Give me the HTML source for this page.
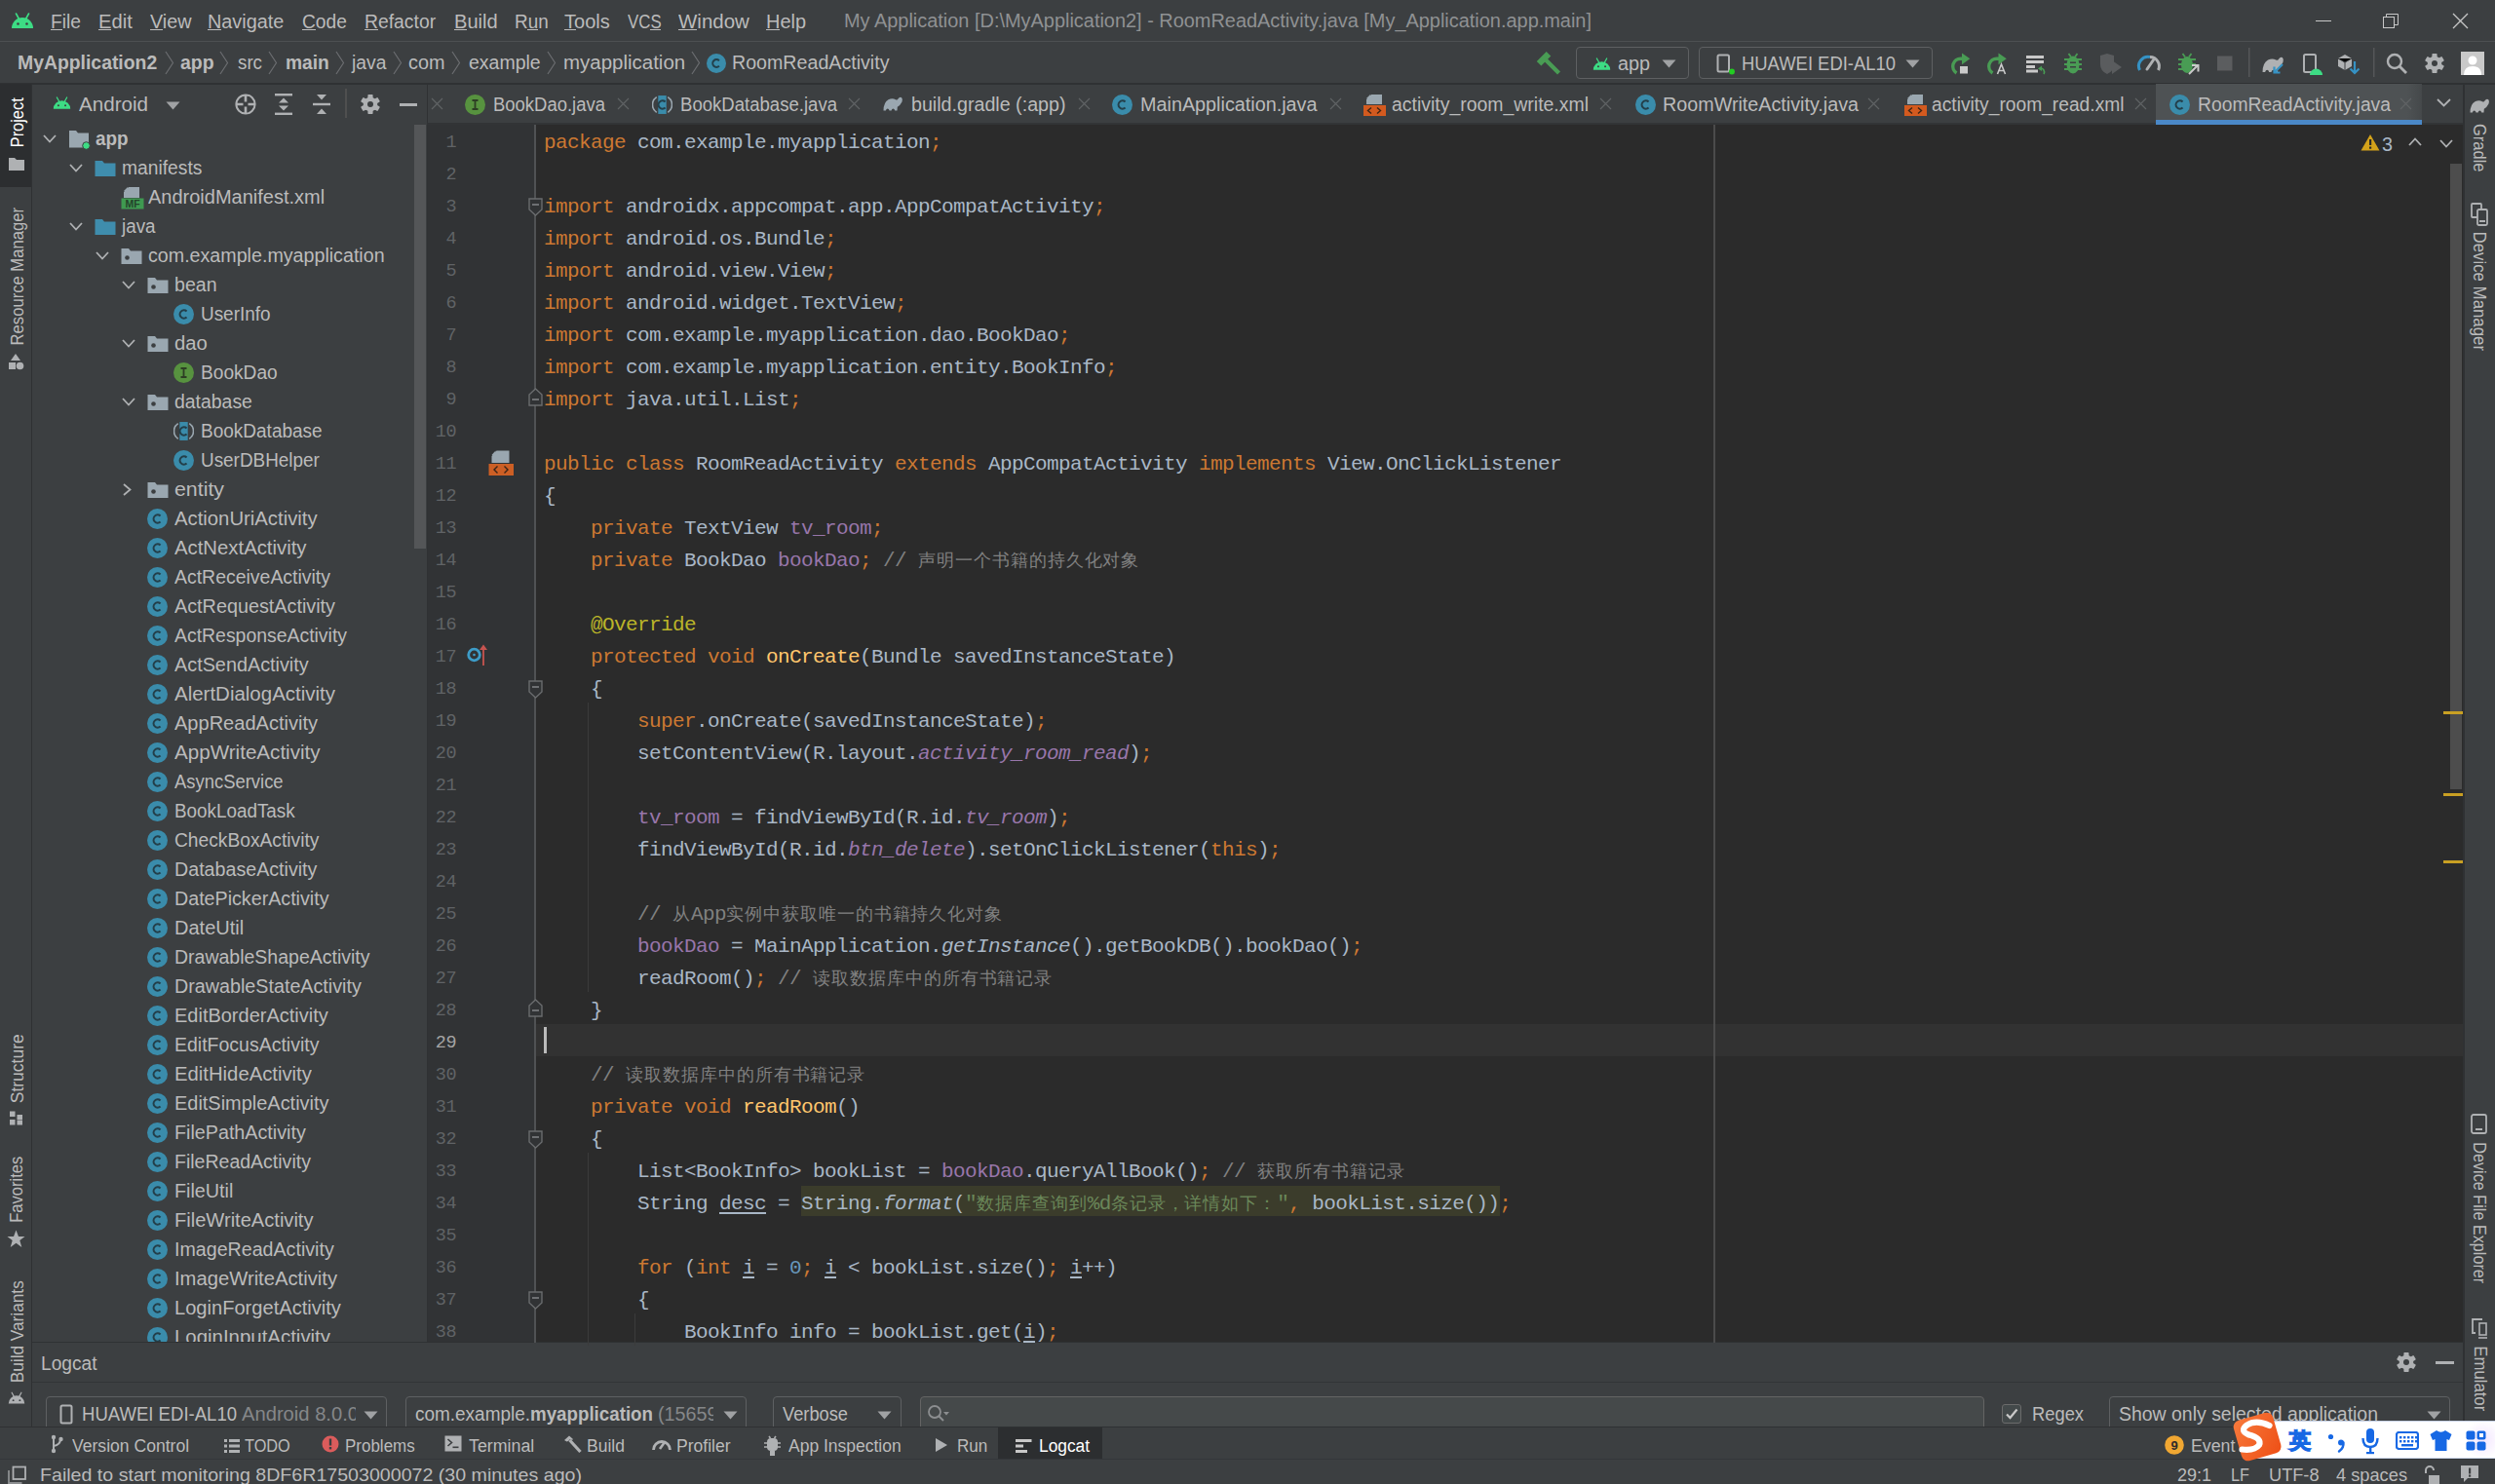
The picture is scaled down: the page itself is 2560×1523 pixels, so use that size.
<!DOCTYPE html><html><head><meta charset="utf-8"><title>Android Studio</title><style>
*{margin:0;padding:0;box-sizing:border-box}
html,body{width:2560px;height:1523px;overflow:hidden;background:#3c3f41}
body{position:relative;font-family:"Liberation Sans",sans-serif}
body>div{position:absolute}
.t{position:absolute;white-space:pre}
.code{position:absolute;white-space:pre;font-family:"Liberation Mono",monospace;}
</style></head><body>
<div style="position:absolute;left:0px;top:0px;width:2560px;height:1523px;background:#3c3f41;"></div>
<div style="position:absolute;left:0px;top:42px;width:2560px;height:1px;background:#4d5052;"></div>
<div style="position:absolute;left:0px;top:85px;width:2560px;height:2px;background:#2f3133;"></div>
<div style="position:absolute;left:32px;top:86px;width:1px;height:1378px;background:#2f3133;"></div>
<div style="position:absolute;left:2527px;top:86px;width:2px;height:1378px;background:#2f3133;"></div>
<div style="position:absolute;left:439px;top:128px;width:2088px;height:1250px;background:#2b2b2b;"></div>
<div style="position:absolute;left:439px;top:128px;width:110px;height:1250px;background:#313335;"></div>
<div style="position:absolute;left:438px;top:86px;width:1px;height:1292px;background:#2f3133;"></div>
<div style="position:absolute;left:33px;top:1377px;width:2494px;height:1px;background:#2f3133;"></div>
<div style="position:absolute;left:33px;top:1418px;width:2494px;height:1px;background:#323436;"></div>
<div style="position:absolute;left:0px;top:1464px;width:2560px;height:1px;background:#2f3133;"></div>
<div style="position:absolute;left:0px;top:1497px;width:2560px;height:1px;background:#323436;"></div>
<svg style="position:absolute;left:11px;top:13px" width="24" height="16" viewBox="0 0 24 16"><path d="M1 16 A11 11 0 0 1 23 16 Z" fill="#3ddc84"/><path d="M5.5 1 L8.5 6.5 M18.5 1 L15.5 6.5" stroke="#3ddc84" stroke-width="1.6" stroke-linecap="round"/><circle cx="7.5" cy="11.5" r="1.3" fill="#3c3f41"/><circle cx="16.5" cy="11.5" r="1.3" fill="#3c3f41"/></svg>
<div class="t" style="left:52.4px;top:12.07px;font-size:20px;line-height:20px;color:#bbbbbb;transform:scaleX(0.9650);transform-origin:0 0;">File</div>
<div style="position:absolute;left:52px;top:30px;width:12px;height:1px;background:#bbbbbb;"></div>
<div class="t" style="left:101.0px;top:12.07px;font-size:20px;line-height:20px;color:#bbbbbb;transform:scaleX(1.0097);transform-origin:0 0;">Edit</div>
<div style="position:absolute;left:101px;top:30px;width:13px;height:1px;background:#bbbbbb;"></div>
<div class="t" style="left:154.0px;top:12.07px;font-size:20px;line-height:20px;color:#bbbbbb;transform:scaleX(0.9886);transform-origin:0 0;">View</div>
<div style="position:absolute;left:154px;top:30px;width:13px;height:1px;background:#bbbbbb;"></div>
<div class="t" style="left:212.6px;top:12.07px;font-size:20px;line-height:20px;color:#bbbbbb;transform:scaleX(0.9919);transform-origin:0 0;">Navigate</div>
<div style="position:absolute;left:213px;top:30px;width:14px;height:1px;background:#bbbbbb;"></div>
<div class="t" style="left:310.0px;top:12.07px;font-size:20px;line-height:20px;color:#bbbbbb;transform:scaleX(0.9579);transform-origin:0 0;">Code</div>
<div style="position:absolute;left:310px;top:30px;width:14px;height:1px;background:#bbbbbb;"></div>
<div class="t" style="left:374.0px;top:12.07px;font-size:20px;line-height:20px;color:#bbbbbb;transform:scaleX(0.9671);transform-origin:0 0;">Refactor</div>
<div style="position:absolute;left:374px;top:30px;width:14px;height:1px;background:#bbbbbb;"></div>
<div class="t" style="left:465.5px;top:12.07px;font-size:20px;line-height:20px;color:#bbbbbb;transform:scaleX(1.0051);transform-origin:0 0;">Build</div>
<div style="position:absolute;left:466px;top:30px;width:13px;height:1px;background:#bbbbbb;"></div>
<div class="t" style="left:527.5px;top:12.07px;font-size:20px;line-height:20px;color:#bbbbbb;transform:scaleX(0.9457);transform-origin:0 0;">Run</div>
<div style="position:absolute;left:541px;top:30px;width:11px;height:1px;background:#bbbbbb;"></div>
<div class="t" style="left:579.0px;top:12.07px;font-size:20px;line-height:20px;color:#bbbbbb;transform:scaleX(1.0002);transform-origin:0 0;">Tools</div>
<div style="position:absolute;left:579px;top:30px;width:12px;height:1px;background:#bbbbbb;"></div>
<div class="t" style="left:644.0px;top:12.07px;font-size:20px;line-height:20px;color:#bbbbbb;transform:scaleX(0.8438);transform-origin:0 0;">VCS</div>
<div style="position:absolute;left:667px;top:30px;width:11px;height:1px;background:#bbbbbb;"></div>
<div class="t" style="left:696.0px;top:12.07px;font-size:20px;line-height:20px;color:#bbbbbb;transform:scaleX(1.0248);transform-origin:0 0;">Window</div>
<div style="position:absolute;left:696px;top:30px;width:19px;height:1px;background:#bbbbbb;"></div>
<div class="t" style="left:785.5px;top:12.07px;font-size:20px;line-height:20px;color:#bbbbbb;transform:scaleX(0.9967);transform-origin:0 0;">Help</div>
<div style="position:absolute;left:786px;top:30px;width:14px;height:1px;background:#bbbbbb;"></div>
<div class="t" style="left:866.0px;top:10.77px;font-size:20px;line-height:20px;color:#8f9193;transform:scaleX(0.9961);transform-origin:0 0;">My Application [D:\MyApplication2] - RoomReadActivity.java [My_Application.app.main]</div>
<div style="position:absolute;left:2376px;top:21px;width:16px;height:1px;background:#c8c8c8;"></div>
<svg style="position:absolute;left:2445px;top:13px;" width="18" height="16" viewBox="0 0 18 16"><rect x="0.5" y="4.5" width="11" height="11" fill="none" stroke="#c8c8c8" stroke-width="1"/><path d="M3.5 4.5 V1.5 H15.5 V12.5 H11.5" fill="none" stroke="#c8c8c8" stroke-width="1"/></svg>
<svg style="position:absolute;left:2516px;top:13px;" width="17" height="17" viewBox="0 0 17 17"><path d="M1 1 L16 16 M16 1 L1 16" stroke="#c8c8c8" stroke-width="1.3"/></svg>
<div class="t" style="left:17.8px;top:54.07px;font-size:20px;line-height:20px;color:#bbbbbb;font-weight:bold;transform:scaleX(0.9689);transform-origin:0 0;">MyApplication2</div>
<div class="t" style="left:184.8px;top:54.07px;font-size:20px;line-height:20px;color:#bbbbbb;font-weight:bold;transform:scaleX(0.9759);transform-origin:0 0;">app</div>
<div class="t" style="left:244.3px;top:54.07px;font-size:20px;line-height:20px;color:#bbbbbb;transform:scaleX(0.9377);transform-origin:0 0;">src</div>
<div class="t" style="left:293.0px;top:54.07px;font-size:20px;line-height:20px;color:#bbbbbb;font-weight:bold;transform:scaleX(0.9597);transform-origin:0 0;">main</div>
<div class="t" style="left:360.8px;top:54.07px;font-size:20px;line-height:20px;color:#bbbbbb;transform:scaleX(0.9648);transform-origin:0 0;">java</div>
<div class="t" style="left:419.0px;top:54.07px;font-size:20px;line-height:20px;color:#bbbbbb;transform:scaleX(0.9925);transform-origin:0 0;">com</div>
<div class="t" style="left:481.3px;top:54.07px;font-size:20px;line-height:20px;color:#bbbbbb;transform:scaleX(0.9749);transform-origin:0 0;">example</div>
<div class="t" style="left:578.0px;top:54.07px;font-size:20px;line-height:20px;color:#bbbbbb;transform:scaleX(1.0238);transform-origin:0 0;">myapplication</div>
<div class="t" style="left:751.0px;top:54.07px;font-size:20px;line-height:20px;color:#bbbbbb;transform:scaleX(0.9817);transform-origin:0 0;">RoomReadActivity</div>
<svg style="position:absolute;left:169px;top:52px;" width="10" height="25" viewBox="0 0 10 25"><path d="M1 1 L8.5 12.5 L1 24" fill="none" stroke="#6b6d70" stroke-width="1.2"/></svg>
<svg style="position:absolute;left:225px;top:52px;" width="10" height="25" viewBox="0 0 10 25"><path d="M1 1 L8.5 12.5 L1 24" fill="none" stroke="#6b6d70" stroke-width="1.2"/></svg>
<svg style="position:absolute;left:275px;top:52px;" width="10" height="25" viewBox="0 0 10 25"><path d="M1 1 L8.5 12.5 L1 24" fill="none" stroke="#6b6d70" stroke-width="1.2"/></svg>
<svg style="position:absolute;left:344px;top:52px;" width="10" height="25" viewBox="0 0 10 25"><path d="M1 1 L8.5 12.5 L1 24" fill="none" stroke="#6b6d70" stroke-width="1.2"/></svg>
<svg style="position:absolute;left:403px;top:52px;" width="10" height="25" viewBox="0 0 10 25"><path d="M1 1 L8.5 12.5 L1 24" fill="none" stroke="#6b6d70" stroke-width="1.2"/></svg>
<svg style="position:absolute;left:463px;top:52px;" width="10" height="25" viewBox="0 0 10 25"><path d="M1 1 L8.5 12.5 L1 24" fill="none" stroke="#6b6d70" stroke-width="1.2"/></svg>
<svg style="position:absolute;left:561px;top:52px;" width="10" height="25" viewBox="0 0 10 25"><path d="M1 1 L8.5 12.5 L1 24" fill="none" stroke="#6b6d70" stroke-width="1.2"/></svg>
<svg style="position:absolute;left:709px;top:52px;" width="10" height="25" viewBox="0 0 10 25"><path d="M1 1 L8.5 12.5 L1 24" fill="none" stroke="#6b6d70" stroke-width="1.2"/></svg>
<svg style="position:absolute;left:725px;top:55px" width="20" height="20" viewBox="0 0 20 20"><circle cx="10" cy="10" r="10" fill="#3a8cab"/><path d="M12.9 7.2 A3.9 3.9 0 1 0 12.9 12.8" stroke="#233f4a" stroke-width="2" fill="none"/></svg>
<svg style="position:absolute;left:1576px;top:53px;" width="26" height="24" viewBox="0 0 26 24"><rect x="1" y="4" width="14" height="6.5" fill="#499c54" transform="rotate(-45 8 7.25)"/><path d="M10 8.5 L23.5 22" stroke="#499c54" stroke-width="4.2" stroke-linecap="butt"/></svg>
<div style="position:absolute;left:1617px;top:48px;width:116px;height:33px;background:transparent;border:1.5px solid #5e6062;border-radius:4px;"></div>
<svg style="position:absolute;left:1634px;top:59px" width="19" height="13" viewBox="0 0 24 16"><path d="M1 16 A11 11 0 0 1 23 16 Z" fill="#3ddc84"/><path d="M5.5 1 L8.5 6.5 M18.5 1 L15.5 6.5" stroke="#3ddc84" stroke-width="1.6" stroke-linecap="round"/><circle cx="7.5" cy="11.5" r="1.3" fill="#3c3f41"/><circle cx="16.5" cy="11.5" r="1.3" fill="#3c3f41"/></svg>
<div class="t" style="left:1660.0px;top:55.07px;font-size:20px;line-height:20px;color:#bbbbbb;transform:scaleX(0.9889);transform-origin:0 0;">app</div>
<svg style="position:absolute;left:1705px;top:61px;" width="15" height="9" viewBox="0 0 15 9"><path d="M0.5 0.5 H14.5 L7.5 8.5 Z" fill="#a0a2a4"/></svg>
<div style="position:absolute;left:1743px;top:48px;width:240px;height:33px;background:transparent;border:1.5px solid #5e6062;border-radius:4px;"></div>
<svg style="position:absolute;left:1761px;top:55px;" width="20" height="22" viewBox="0 0 20 22"><rect x="1.5" y="1.5" width="11.5" height="17" rx="1.5" fill="none" stroke="#afb1b3" stroke-width="2"/><circle cx="16" cy="18.5" r="3" fill="#22cc22"/></svg>
<div class="t" style="left:1786.5px;top:55.07px;font-size:20px;line-height:20px;color:#bbbbbb;transform:scaleX(0.9211);transform-origin:0 0;">HUAWEI EDI-AL10</div>
<svg style="position:absolute;left:1955px;top:61px;" width="15" height="9" viewBox="0 0 15 9"><path d="M0.5 0.5 H14.5 L7.5 8.5 Z" fill="#a0a2a4"/></svg>
<svg style="position:absolute;left:1995px;top:50px;overflow:visible" width="70" height="30" viewBox="0 0 70 30"></svg>
<svg style="position:absolute;left:0;top:0" width="2560" height="90" viewBox="0 0 2560 90"><path d="M2007.5 75 A8 8 0 0 1 2012 60.2 L2014 60.2" fill="none" stroke="#499c54" stroke-width="3.4"/><path d="M2013 54.6 L2021.3 60.2 L2013 66.2 Z" fill="#499c54"/><rect x="2011" y="68" width="8" height="7.5" fill="#c9c9c9"/><path d="M2044.5 75 A8 8 0 0 1 2049 60.2 L2051 60.2" fill="none" stroke="#499c54" stroke-width="3.4"/><path d="M2050.5 54.6 L2058.8 60.2 L2050.5 66.2 Z" fill="#499c54"/><path d="M2049.5 76 L2053.5 66 L2057.5 76 M2051 72.5 H2056" fill="none" stroke="#c9c9c9" stroke-width="1.6"/><rect x="2079" y="57" width="18" height="3" fill="#c9c9c9"/><rect x="2079" y="62" width="18" height="3" fill="#c9c9c9"/><rect x="2079" y="67" width="9" height="3" fill="#c9c9c9"/><rect x="2079" y="71.5" width="12" height="3" fill="#c9c9c9"/><path d="M2093 70 A4 4 0 0 1 2097 76" fill="none" stroke="#499c54" stroke-width="1.6"/><path d="M2091 70.5 L2095 67.5 L2095 73 Z" fill="#499c54"/><ellipse cx="2127" cy="66.5" rx="6.5" ry="9" fill="#499c54"/><path d="M2118 61 H2136 M2118 66 H2136 M2118 71 H2136 M2122.5 55 L2125 58.5 M2131.5 55 L2129 58.5" stroke="#499c54" stroke-width="1.8"/><rect x="2124" y="63.5" width="6" height="1.5" fill="#3c3f41"/><rect x="2124" y="68" width="6" height="1.5" fill="#3c3f41"/><path d="M2155 57 L2162 55 L2169 57 V66 Q2169 73 2162 76 Q2155 73 2155 66 Z" fill="#5a5c5e"/><path d="M2167 62 L2177 69 L2167 76 Z" fill="#5a5c5e"/><path d="M2195.5 72 A9.5 9.5 0 0 1 2206 58.5" fill="none" stroke="#3592c4" stroke-width="3"/><path d="M2206 58.5 A9.5 9.5 0 0 1 2214.5 72" fill="none" stroke="#afb1b3" stroke-width="3"/><path d="M2203 71 L2209.5 61.5" stroke="#afb1b3" stroke-width="3" stroke-linecap="round"/><ellipse cx="2244" cy="66.5" rx="6" ry="8.5" fill="#499c54"/><path d="M2235 61 H2253 M2235 66 H2253 M2235 71 H2247 M2239.5 55 L2242 58.5 M2248.5 55 L2246 58.5" stroke="#499c54" stroke-width="1.8"/><path d="M2246 76 L2255 67 M2249 67 H2255.5 V73.5" fill="none" stroke="#c9c9c9" stroke-width="2"/><rect x="2275" y="57.5" width="15.5" height="15" fill="#5b5d5f"/><rect x="2307" y="49" width="1.5" height="30" fill="#555759"/><rect x="2435" y="49" width="1.5" height="30" fill="#555759"/><g transform="translate(2321 58) scale(1.1)"><path d="M0.5 14.5 Q0.5 6 5.5 3.2 Q9.5 1.5 13 3.2 Q14.8 4 15.6 2.2 Q17 0 19 1 Q20.5 2.5 19.5 5.5 Q17.8 9 14.8 10.8 L14.5 14.5 L12.3 14.5 Q11.6 12.4 10.4 12.4 Q9.2 12.4 8.6 14.5 L6.6 14.5 Q6 12.4 4.7 12.4 Q3.5 12.4 2.8 14.5 Z" fill="#afb1b3"/></g><path d="M2342 66 L2334 74 M2333.5 68.5 V74.5 H2339.5" fill="none" stroke="#3592c4" stroke-width="2.2"/><rect x="2364" y="56" width="12" height="18" rx="1.5" fill="none" stroke="#afb1b3" stroke-width="2"/><path d="M2370 77 A6.5 6.5 0 0 1 2383 77 Z" fill="#3ddc84"/><path d="M2399 60 L2406 56 L2413 60 L2413 68 L2406 72 L2399 68 Z" fill="#afb1b3"/><path d="M2399 60 L2406 64 L2413 60 M2406 64 V72" stroke="#3c3f41" stroke-width="1"/><path d="M2416 63 V75 M2411.5 70.5 L2416 75 L2420.5 70.5" fill="none" stroke="#3592c4" stroke-width="2.2"/><circle cx="2457" cy="63" r="7" fill="none" stroke="#afb1b3" stroke-width="2.4"/><path d="M2462 68 L2469 75" stroke="#afb1b3" stroke-width="2.8"/></svg>
<svg style="position:absolute;left:2488px;top:55px" width="20" height="20" viewBox="0 0 20 20"><circle cx="10" cy="10" r="7.3" fill="#afb1b3"/><rect x="7.4" y="0" width="5.2" height="20" rx="0.8" fill="#afb1b3" transform="rotate(0 10 10)"/><rect x="7.4" y="0" width="5.2" height="20" rx="0.8" fill="#afb1b3" transform="rotate(60 10 10)"/><rect x="7.4" y="0" width="5.2" height="20" rx="0.8" fill="#afb1b3" transform="rotate(120 10 10)"/><circle cx="10" cy="10" r="3" fill="#3c3f41"/></svg>
<svg style="position:absolute;left:2525px;top:53px;" width="24" height="24" viewBox="0 0 24 24"><rect width="24" height="24" fill="#c9c9c9"/><circle cx="12" cy="9" r="4.5" fill="#fff"/><path d="M3 24 Q3 15 12 15 Q21 15 21 24 Z" fill="#fff"/></svg>
<div style="position:absolute;left:438px;top:126px;width:2089px;height:2px;background:#323436;"></div>
<div style="position:absolute;left:2212px;top:86px;width:273px;height:37px;background:#4e5254;"></div>
<div style="position:absolute;left:2212px;top:123px;width:273px;height:5px;background:#4a88c7;"></div>
<div style="position:absolute;left:2470px;top:86px;width:15px;height:37px;background:linear-gradient(90deg,rgba(60,63,65,0),rgba(60,63,65,0.5));"></div>
<svg style="position:absolute;left:442px;top:100px;" width="13" height="13" viewBox="0 0 13 13"><path d="M1 1 L12 12 M12 1 L1 12" stroke="#5f6264" stroke-width="1.2"/></svg>
<svg style="position:absolute;left:477px;top:97px;" width="21" height="21" viewBox="0 0 21 21"><circle cx="10.5" cy="10.5" r="10.5" fill="#57923f"/><path d="M7.5 6 H13.5 M7.5 15 H13.5 M10.5 6 V15" stroke="#2d3d24" stroke-width="1.8"/></svg>
<div class="t" style="left:506.0px;top:97.07px;font-size:20px;line-height:20px;color:#bbbbbb;transform:scaleX(0.9235);transform-origin:0 0;">BookDao.java</div>
<svg style="position:absolute;left:633px;top:100px;" width="13" height="13" viewBox="0 0 13 13"><path d="M1 1 L12 12 M12 1 L1 12" stroke="#5f6264" stroke-width="1.2"/></svg>
<svg style="position:absolute;left:669px;top:97px" width="21" height="21" viewBox="0 0 20 20"><path d="M4.5 2.5 A9 9 0 0 0 4.5 17.5" stroke="#9aa7b0" stroke-width="1.6" fill="none"/><path d="M15.5 2.5 A9 9 0 0 1 15.5 17.5" stroke="#9aa7b0" stroke-width="1.6" fill="none"/><rect x="6" y="1" width="8" height="18" fill="#3a8cab"/><path d="M12.9 7.2 A3.9 3.9 0 1 0 12.9 12.8" stroke="#233f4a" stroke-width="2" fill="none"/></svg>
<div class="t" style="left:698.0px;top:97.07px;font-size:20px;line-height:20px;color:#bbbbbb;transform:scaleX(0.9282);transform-origin:0 0;">BookDatabase.java</div>
<svg style="position:absolute;left:870px;top:100px;" width="13" height="13" viewBox="0 0 13 13"><path d="M1 1 L12 12 M12 1 L1 12" stroke="#5f6264" stroke-width="1.2"/></svg>
<svg style="position:absolute;left:906px;top:99px;" width="22" height="16" viewBox="0 0 22 16"><path d="M0.5 14.5 Q0.5 6 5.5 3.2 Q9.5 1.5 13 3.2 Q14.8 4 15.6 2.2 Q17 0 19 1 Q20.5 2.5 19.5 5.5 Q17.8 9 14.8 10.8 L14.5 14.5 L12.3 14.5 Q11.6 12.4 10.4 12.4 Q9.2 12.4 8.6 14.5 L6.6 14.5 Q6 12.4 4.7 12.4 Q3.5 12.4 2.8 14.5 Z" fill="#9aa7b0"/></svg>
<div class="t" style="left:935.0px;top:97.07px;font-size:20px;line-height:20px;color:#bbbbbb;transform:scaleX(0.9831);transform-origin:0 0;">build.gradle (:app)</div>
<svg style="position:absolute;left:1106px;top:100px;" width="13" height="13" viewBox="0 0 13 13"><path d="M1 1 L12 12 M12 1 L1 12" stroke="#5f6264" stroke-width="1.2"/></svg>
<svg style="position:absolute;left:1141px;top:97px" width="21" height="21" viewBox="0 0 20 20"><circle cx="10" cy="10" r="10" fill="#3a8cab"/><path d="M12.9 7.2 A3.9 3.9 0 1 0 12.9 12.8" stroke="#233f4a" stroke-width="2" fill="none"/></svg>
<div class="t" style="left:1170.0px;top:97.07px;font-size:20px;line-height:20px;color:#bbbbbb;transform:scaleX(0.9894);transform-origin:0 0;">MainApplication.java</div>
<svg style="position:absolute;left:1364px;top:100px;" width="13" height="13" viewBox="0 0 13 13"><path d="M1 1 L12 12 M12 1 L1 12" stroke="#5f6264" stroke-width="1.2"/></svg>
<svg style="position:absolute;left:1398px;top:96px" width="24" height="24" viewBox="0 0 24 24"><path d="M9 1 H20 V11 H4 V6 Z" fill="#9aa7b0"/><path d="M4 5 L8 1 V5 Z" fill="#9aa7b0"/><rect x="1" y="12" width="23" height="11" fill="#d35a1f"/><path d="M9 14.5 L5.5 17.5 L9 20.5 M15 14.5 L18.5 17.5 L15 20.5" fill="none" stroke="#3c2416" stroke-width="1.4"/></svg>
<div class="t" style="left:1427.5px;top:97.07px;font-size:20px;line-height:20px;color:#bbbbbb;transform:scaleX(0.9720);transform-origin:0 0;">activity_room_write.xml</div>
<svg style="position:absolute;left:1641px;top:100px;" width="13" height="13" viewBox="0 0 13 13"><path d="M1 1 L12 12 M12 1 L1 12" stroke="#5f6264" stroke-width="1.2"/></svg>
<svg style="position:absolute;left:1678px;top:97px" width="21" height="21" viewBox="0 0 20 20"><circle cx="10" cy="10" r="10" fill="#3a8cab"/><path d="M12.9 7.2 A3.9 3.9 0 1 0 12.9 12.8" stroke="#233f4a" stroke-width="2" fill="none"/></svg>
<div class="t" style="left:1706.0px;top:97.07px;font-size:20px;line-height:20px;color:#bbbbbb;transform:scaleX(0.9865);transform-origin:0 0;">RoomWriteActivity.java</div>
<svg style="position:absolute;left:1916px;top:100px;" width="13" height="13" viewBox="0 0 13 13"><path d="M1 1 L12 12 M12 1 L1 12" stroke="#5f6264" stroke-width="1.2"/></svg>
<svg style="position:absolute;left:1953px;top:96px" width="24" height="24" viewBox="0 0 24 24"><path d="M9 1 H20 V11 H4 V6 Z" fill="#9aa7b0"/><path d="M4 5 L8 1 V5 Z" fill="#9aa7b0"/><rect x="1" y="12" width="23" height="11" fill="#d35a1f"/><path d="M9 14.5 L5.5 17.5 L9 20.5 M15 14.5 L18.5 17.5 L15 20.5" fill="none" stroke="#3c2416" stroke-width="1.4"/></svg>
<div class="t" style="left:1981.5px;top:97.07px;font-size:20px;line-height:20px;color:#bbbbbb;transform:scaleX(0.9605);transform-origin:0 0;">activity_room_read.xml</div>
<svg style="position:absolute;left:2190px;top:100px;" width="13" height="13" viewBox="0 0 13 13"><path d="M1 1 L12 12 M12 1 L1 12" stroke="#5f6264" stroke-width="1.2"/></svg>
<svg style="position:absolute;left:2226px;top:97px" width="21" height="21" viewBox="0 0 20 20"><circle cx="10" cy="10" r="10" fill="#3a8cab"/><path d="M12.9 7.2 A3.9 3.9 0 1 0 12.9 12.8" stroke="#233f4a" stroke-width="2" fill="none"/></svg>
<div class="t" style="left:2255.0px;top:97.07px;font-size:20px;line-height:20px;color:#bbbbbb;transform:scaleX(0.9646);transform-origin:0 0;">RoomReadActivity.java</div>
<svg style="position:absolute;left:2462px;top:100px;" width="13" height="13" viewBox="0 0 13 13"><path d="M1 1 L12 12 M12 1 L1 12" stroke="#5f6264" stroke-width="1.2"/></svg>
<svg style="position:absolute;left:2500px;top:101px;" width="15" height="9" viewBox="0 0 15 9"><path d="M1 1 L7.5 7.5 L14 1" fill="none" stroke="#afb1b3" stroke-width="1.8"/></svg>
<div style="position:absolute;left:0px;top:86px;width:32px;height:106px;background:#2c2e30;"></div>
<div class="t" style="left:-9.0px;top:116.8px;width:54.5px;height:17.5px;font-size:17.5px;line-height:17.5px;color:#ffffff;transform:rotate(-90deg) scaleX(0.9363);transform-origin:50% 50%;text-align:left">Project</div>
<svg style="position:absolute;left:8px;top:161px;" width="18" height="15" viewBox="0 0 18 15"><path d="M1 1 H7 L9 3 H17 V14 H1 Z" fill="#afb1b3"/></svg>
<div class="t" style="left:-56.2px;top:274.6px;width:148.8px;height:17.5px;font-size:17.5px;line-height:17.5px;color:#bbbbbb;transform:rotate(-90deg) scaleX(0.9494);transform-origin:50% 50%;text-align:left">Resource Manager</div>
<svg style="position:absolute;left:7px;top:362px;" width="18" height="19" viewBox="0 0 18 19"><path d="M9 1 L14 8 H4 Z" fill="#afb1b3"/><rect x="2" y="10" width="7" height="7" fill="#afb1b3"/><circle cx="13.5" cy="13.5" r="3.8" fill="#afb1b3"/></svg>
<div class="t" style="left:-17.3px;top:1087.8px;width:71.0px;height:17.5px;font-size:17.5px;line-height:17.5px;color:#bbbbbb;transform:rotate(-90deg) scaleX(1.0000);transform-origin:50% 50%;text-align:left">Structure</div>
<svg style="position:absolute;left:9px;top:1140px;" width="16" height="15" viewBox="0 0 16 15"><rect x="1" y="0.5" width="5.5" height="5.5" fill="#afb1b3"/><rect x="8.5" y="4" width="5.5" height="5" fill="#afb1b3"/><rect x="1" y="9" width="5.5" height="5.5" fill="#afb1b3"/><rect x="8.5" y="9.5" width="5.5" height="5" fill="#afb1b3"/></svg>
<div class="t" style="left:-17.8px;top:1212.2px;width:72.0px;height:17.5px;font-size:17.5px;line-height:17.5px;color:#bbbbbb;transform:rotate(-90deg) scaleX(0.9449);transform-origin:50% 50%;text-align:left">Favorites</div>
<svg style="position:absolute;left:7px;top:1262px;" width="19" height="19" viewBox="0 0 19 19"><path d="M9.5 0.5 L12 7 L18.5 7 L13.3 11 L15.3 18 L9.5 13.8 L3.7 18 L5.7 11 L0.5 7 L7 7 Z" fill="#afb1b3"/></svg>
<div class="t" style="left:-35.1px;top:1357.8px;width:106.7px;height:17.5px;font-size:17.5px;line-height:17.5px;color:#bbbbbb;transform:rotate(-90deg) scaleX(0.9843);transform-origin:50% 50%;text-align:left">Build Variants</div>
<svg style="position:absolute;left:8px;top:1428px" width="18" height="13" viewBox="0 0 24 16"><path d="M1 16 A11 11 0 0 1 23 16 Z" fill="#afb1b3"/><path d="M5.5 1 L8.5 6.5 M18.5 1 L15.5 6.5" stroke="#afb1b3" stroke-width="1.6" stroke-linecap="round"/><circle cx="7.5" cy="11.5" r="1.3" fill="#3c3f41"/><circle cx="16.5" cy="11.5" r="1.3" fill="#3c3f41"/></svg>
<svg style="position:absolute;left:54px;top:99px" width="19" height="13" viewBox="0 0 24 16"><path d="M1 16 A11 11 0 0 1 23 16 Z" fill="#3ddc84"/><path d="M5.5 1 L8.5 6.5 M18.5 1 L15.5 6.5" stroke="#3ddc84" stroke-width="1.6" stroke-linecap="round"/><circle cx="7.5" cy="11.5" r="1.3" fill="#3c3f41"/><circle cx="16.5" cy="11.5" r="1.3" fill="#3c3f41"/></svg>
<div class="t" style="left:80.5px;top:97.07px;font-size:20px;line-height:20px;color:#bbbbbb;transform:scaleX(1.0299);transform-origin:0 0;">Android</div>
<svg style="position:absolute;left:170px;top:104px;" width="15" height="9" viewBox="0 0 15 9"><path d="M0.5 0.5 H14.5 L7.5 8.5 Z" fill="#a0a2a4"/></svg>
<svg style="position:absolute;left:240px;top:96px;" width="24" height="24" viewBox="0 0 24 24"><circle cx="12" cy="11" r="9.6" fill="none" stroke="#afb1b3" stroke-width="2"/><path d="M12 2 V8.5 M12 13.5 V20 M2.5 11 H9.5 M14.5 11 H21.5" stroke="#afb1b3" stroke-width="2.6"/></svg>
<svg style="position:absolute;left:281px;top:95px;" width="20" height="24" viewBox="0 0 20 24"><rect x="1" y="1" width="18" height="2.4" fill="#afb1b3"/><rect x="1" y="20.6" width="18" height="2.4" fill="#afb1b3"/><path d="M5 10.5 L10 5.5 L15 10.5 Z M5 13.5 L10 18.5 L15 13.5 Z" fill="#afb1b3"/></svg>
<svg style="position:absolute;left:320px;top:96px;" width="20" height="22" viewBox="0 0 20 22"><rect x="1" y="9.8" width="18" height="2.4" fill="#afb1b3"/><path d="M5 1 L10 6.5 L15 1 Z M5 21 L10 15.5 L15 21 Z" fill="#afb1b3"/></svg>
<div style="position:absolute;left:354px;top:91px;width:2px;height:30px;background:#4f4f4f;"></div>
<svg style="position:absolute;left:370px;top:97px" width="20" height="20" viewBox="0 0 20 20"><circle cx="10" cy="10" r="7.3" fill="#afb1b3"/><rect x="7.4" y="0" width="5.2" height="20" rx="0.8" fill="#afb1b3" transform="rotate(0 10 10)"/><rect x="7.4" y="0" width="5.2" height="20" rx="0.8" fill="#afb1b3" transform="rotate(60 10 10)"/><rect x="7.4" y="0" width="5.2" height="20" rx="0.8" fill="#afb1b3" transform="rotate(120 10 10)"/><circle cx="10" cy="10" r="3" fill="#3c3f41"/></svg>
<div style="position:absolute;left:410px;top:106px;width:18px;height:3px;background:#afb1b3;"></div>
<div style="position:absolute;left:33px;top:128px;width:404px;height:1249px;overflow:hidden">
<svg style="position:absolute;left:11px;top:10px;" width="14" height="9" viewBox="0 0 14 9"><path d="M1 1 L7 7.5 L13 1" fill="none" stroke="#afb1b3" stroke-width="1.8"/></svg>
<svg style="position:absolute;left:37px;top:4px;" width="24" height="22" viewBox="0 0 24 22"><path d="M1 2 H8 L10 4.5 H21 V19.5 H1 Z" fill="#9aa7b0"/><circle cx="18.5" cy="17.5" r="3.8" fill="#3ddc84" stroke="#3c3f41" stroke-width="1"/></svg>
<div class="t" style="left:65.0px;top:4.07px;font-size:20px;line-height:20px;color:#bbbbbb;font-weight:bold;transform:scaleX(0.9449);transform-origin:0 0;">app</div>
<svg style="position:absolute;left:38px;top:40px;" width="14" height="9" viewBox="0 0 14 9"><path d="M1 1 L7 7.5 L13 1" fill="none" stroke="#afb1b3" stroke-width="1.8"/></svg>
<svg style="position:absolute;left:64px;top:34px;" width="22" height="22" viewBox="0 0 22 22"><path d="M0.5 3 H8 L10 5.5 H21.5 V19 H0.5 Z" fill="#3f8dad"/></svg>
<div class="t" style="left:91.5px;top:34.07px;font-size:20px;line-height:20px;color:#bbbbbb;transform:scaleX(0.9628);transform-origin:0 0;">manifests</div>
<svg style="position:absolute;left:91px;top:63px;" width="24" height="24" viewBox="0 0 24 24"><path d="M8 1 H19 V12 H3 V6 Z" fill="#9aa7b0"/><path d="M3 5 L7 1 V5 Z" fill="#9aa7b0"/><rect x="0.5" y="12.5" width="23" height="11" fill="#3f9a51"/><text x="12" y="22.2" font-size="10.5" font-family="Liberation Sans" font-weight="bold" fill="#24432b" text-anchor="middle">MF</text></svg>
<div class="t" style="left:118.5px;top:64.07px;font-size:20px;line-height:20px;color:#bbbbbb;transform:scaleX(1.0001);transform-origin:0 0;">AndroidManifest.xml</div>
<svg style="position:absolute;left:38px;top:100px;" width="14" height="9" viewBox="0 0 14 9"><path d="M1 1 L7 7.5 L13 1" fill="none" stroke="#afb1b3" stroke-width="1.8"/></svg>
<svg style="position:absolute;left:64px;top:94px;" width="22" height="22" viewBox="0 0 22 22"><path d="M0.5 3 H8 L10 5.5 H21.5 V19 H0.5 Z" fill="#3f8dad"/></svg>
<div class="t" style="left:91.5px;top:94.07px;font-size:20px;line-height:20px;color:#bbbbbb;transform:scaleX(0.9403);transform-origin:0 0;">java</div>
<svg style="position:absolute;left:65px;top:130px;" width="14" height="9" viewBox="0 0 14 9"><path d="M1 1 L7 7.5 L13 1" fill="none" stroke="#afb1b3" stroke-width="1.8"/></svg>
<svg style="position:absolute;left:91px;top:124px;" width="22" height="22" viewBox="0 0 22 22"><path d="M0.5 3 H8 L10 5.5 H21.5 V19 H0.5 Z" fill="#9aa7b0"/><circle cx="6.5" cy="12.5" r="2.3" fill="#3c3f41"/></svg>
<div class="t" style="left:118.5px;top:124.07px;font-size:20px;line-height:20px;color:#bbbbbb;transform:scaleX(0.9830);transform-origin:0 0;">com.example.myapplication</div>
<svg style="position:absolute;left:92px;top:160px;" width="14" height="9" viewBox="0 0 14 9"><path d="M1 1 L7 7.5 L13 1" fill="none" stroke="#afb1b3" stroke-width="1.8"/></svg>
<svg style="position:absolute;left:118px;top:154px;" width="22" height="22" viewBox="0 0 22 22"><path d="M0.5 3 H8 L10 5.5 H21.5 V19 H0.5 Z" fill="#9aa7b0"/><circle cx="6.5" cy="12.5" r="2.3" fill="#3c3f41"/></svg>
<div class="t" style="left:145.5px;top:154.07px;font-size:20px;line-height:20px;color:#bbbbbb;transform:scaleX(0.9777);transform-origin:0 0;">bean</div>
<svg style="position:absolute;left:145px;top:184px" width="21" height="21" viewBox="0 0 20 20"><circle cx="10" cy="10" r="10" fill="#3a8cab"/><path d="M12.9 7.2 A3.9 3.9 0 1 0 12.9 12.8" stroke="#233f4a" stroke-width="2" fill="none"/></svg>
<div class="t" style="left:172.5px;top:184.07px;font-size:20px;line-height:20px;color:#bbbbbb;transform:scaleX(0.9459);transform-origin:0 0;">UserInfo</div>
<svg style="position:absolute;left:92px;top:220px;" width="14" height="9" viewBox="0 0 14 9"><path d="M1 1 L7 7.5 L13 1" fill="none" stroke="#afb1b3" stroke-width="1.8"/></svg>
<svg style="position:absolute;left:118px;top:214px;" width="22" height="22" viewBox="0 0 22 22"><path d="M0.5 3 H8 L10 5.5 H21.5 V19 H0.5 Z" fill="#9aa7b0"/><circle cx="6.5" cy="12.5" r="2.3" fill="#3c3f41"/></svg>
<div class="t" style="left:145.5px;top:214.07px;font-size:20px;line-height:20px;color:#bbbbbb;transform:scaleX(1.0129);transform-origin:0 0;">dao</div>
<svg style="position:absolute;left:145px;top:244px;" width="21" height="21" viewBox="0 0 21 21"><circle cx="10.5" cy="10.5" r="10.5" fill="#57923f"/><path d="M7.5 6 H13.5 M7.5 15 H13.5 M10.5 6 V15" stroke="#2d3d24" stroke-width="1.8"/></svg>
<div class="t" style="left:172.5px;top:244.07px;font-size:20px;line-height:20px;color:#bbbbbb;transform:scaleX(0.9565);transform-origin:0 0;">BookDao</div>
<svg style="position:absolute;left:92px;top:280px;" width="14" height="9" viewBox="0 0 14 9"><path d="M1 1 L7 7.5 L13 1" fill="none" stroke="#afb1b3" stroke-width="1.8"/></svg>
<svg style="position:absolute;left:118px;top:274px;" width="22" height="22" viewBox="0 0 22 22"><path d="M0.5 3 H8 L10 5.5 H21.5 V19 H0.5 Z" fill="#9aa7b0"/><circle cx="6.5" cy="12.5" r="2.3" fill="#3c3f41"/></svg>
<div class="t" style="left:145.5px;top:274.07px;font-size:20px;line-height:20px;color:#bbbbbb;transform:scaleX(0.9709);transform-origin:0 0;">database</div>
<svg style="position:absolute;left:145px;top:304px" width="21" height="21" viewBox="0 0 20 20"><path d="M4.5 2.5 A9 9 0 0 0 4.5 17.5" stroke="#9aa7b0" stroke-width="1.6" fill="none"/><path d="M15.5 2.5 A9 9 0 0 1 15.5 17.5" stroke="#9aa7b0" stroke-width="1.6" fill="none"/><rect x="6" y="1" width="8" height="18" fill="#3a8cab"/><path d="M12.9 7.2 A3.9 3.9 0 1 0 12.9 12.8" stroke="#233f4a" stroke-width="2" fill="none"/></svg>
<div class="t" style="left:172.5px;top:304.07px;font-size:20px;line-height:20px;color:#bbbbbb;transform:scaleX(0.9504);transform-origin:0 0;">BookDatabase</div>
<svg style="position:absolute;left:145px;top:334px" width="21" height="21" viewBox="0 0 20 20"><circle cx="10" cy="10" r="10" fill="#3a8cab"/><path d="M12.9 7.2 A3.9 3.9 0 1 0 12.9 12.8" stroke="#233f4a" stroke-width="2" fill="none"/></svg>
<div class="t" style="left:172.5px;top:334.07px;font-size:20px;line-height:20px;color:#bbbbbb;transform:scaleX(0.9447);transform-origin:0 0;">UserDBHelper</div>
<svg style="position:absolute;left:93px;top:368px;" width="9" height="13" viewBox="0 0 9 13"><path d="M1 1 L7.5 6.5 L1 12" fill="none" stroke="#afb1b3" stroke-width="1.8"/></svg>
<svg style="position:absolute;left:118px;top:364px;" width="22" height="22" viewBox="0 0 22 22"><path d="M0.5 3 H8 L10 5.5 H21.5 V19 H0.5 Z" fill="#9aa7b0"/><circle cx="6.5" cy="12.5" r="2.3" fill="#3c3f41"/></svg>
<div class="t" style="left:145.5px;top:364.07px;font-size:20px;line-height:20px;color:#bbbbbb;transform:scaleX(1.0669);transform-origin:0 0;">entity</div>
<svg style="position:absolute;left:118px;top:394px" width="21" height="21" viewBox="0 0 20 20"><circle cx="10" cy="10" r="10" fill="#3a8cab"/><path d="M12.9 7.2 A3.9 3.9 0 1 0 12.9 12.8" stroke="#233f4a" stroke-width="2" fill="none"/></svg>
<div class="t" style="left:145.5px;top:394.07px;font-size:20px;line-height:20px;color:#bbbbbb;transform:scaleX(1.0147);transform-origin:0 0;">ActionUriActivity</div>
<svg style="position:absolute;left:118px;top:424px" width="21" height="21" viewBox="0 0 20 20"><circle cx="10" cy="10" r="10" fill="#3a8cab"/><path d="M12.9 7.2 A3.9 3.9 0 1 0 12.9 12.8" stroke="#233f4a" stroke-width="2" fill="none"/></svg>
<div class="t" style="left:145.5px;top:424.07px;font-size:20px;line-height:20px;color:#bbbbbb;transform:scaleX(1.0160);transform-origin:0 0;">ActNextActivity</div>
<svg style="position:absolute;left:118px;top:454px" width="21" height="21" viewBox="0 0 20 20"><circle cx="10" cy="10" r="10" fill="#3a8cab"/><path d="M12.9 7.2 A3.9 3.9 0 1 0 12.9 12.8" stroke="#233f4a" stroke-width="2" fill="none"/></svg>
<div class="t" style="left:145.5px;top:454.07px;font-size:20px;line-height:20px;color:#bbbbbb;transform:scaleX(0.9727);transform-origin:0 0;">ActReceiveActivity</div>
<svg style="position:absolute;left:118px;top:484px" width="21" height="21" viewBox="0 0 20 20"><circle cx="10" cy="10" r="10" fill="#3a8cab"/><path d="M12.9 7.2 A3.9 3.9 0 1 0 12.9 12.8" stroke="#233f4a" stroke-width="2" fill="none"/></svg>
<div class="t" style="left:145.5px;top:484.07px;font-size:20px;line-height:20px;color:#bbbbbb;transform:scaleX(0.9896);transform-origin:0 0;">ActRequestActivity</div>
<svg style="position:absolute;left:118px;top:514px" width="21" height="21" viewBox="0 0 20 20"><circle cx="10" cy="10" r="10" fill="#3a8cab"/><path d="M12.9 7.2 A3.9 3.9 0 1 0 12.9 12.8" stroke="#233f4a" stroke-width="2" fill="none"/></svg>
<div class="t" style="left:145.5px;top:514.07px;font-size:20px;line-height:20px;color:#bbbbbb;transform:scaleX(0.9709);transform-origin:0 0;">ActResponseActivity</div>
<svg style="position:absolute;left:118px;top:544px" width="21" height="21" viewBox="0 0 20 20"><circle cx="10" cy="10" r="10" fill="#3a8cab"/><path d="M12.9 7.2 A3.9 3.9 0 1 0 12.9 12.8" stroke="#233f4a" stroke-width="2" fill="none"/></svg>
<div class="t" style="left:145.5px;top:544.07px;font-size:20px;line-height:20px;color:#bbbbbb;transform:scaleX(0.9910);transform-origin:0 0;">ActSendActivity</div>
<svg style="position:absolute;left:118px;top:574px" width="21" height="21" viewBox="0 0 20 20"><circle cx="10" cy="10" r="10" fill="#3a8cab"/><path d="M12.9 7.2 A3.9 3.9 0 1 0 12.9 12.8" stroke="#233f4a" stroke-width="2" fill="none"/></svg>
<div class="t" style="left:145.5px;top:574.07px;font-size:20px;line-height:20px;color:#bbbbbb;transform:scaleX(1.0238);transform-origin:0 0;">AlertDialogActivity</div>
<svg style="position:absolute;left:118px;top:604px" width="21" height="21" viewBox="0 0 20 20"><circle cx="10" cy="10" r="10" fill="#3a8cab"/><path d="M12.9 7.2 A3.9 3.9 0 1 0 12.9 12.8" stroke="#233f4a" stroke-width="2" fill="none"/></svg>
<div class="t" style="left:145.5px;top:604.07px;font-size:20px;line-height:20px;color:#bbbbbb;transform:scaleX(1.0018);transform-origin:0 0;">AppReadActivity</div>
<svg style="position:absolute;left:118px;top:634px" width="21" height="21" viewBox="0 0 20 20"><circle cx="10" cy="10" r="10" fill="#3a8cab"/><path d="M12.9 7.2 A3.9 3.9 0 1 0 12.9 12.8" stroke="#233f4a" stroke-width="2" fill="none"/></svg>
<div class="t" style="left:145.5px;top:634.07px;font-size:20px;line-height:20px;color:#bbbbbb;transform:scaleX(1.0301);transform-origin:0 0;">AppWriteActivity</div>
<svg style="position:absolute;left:118px;top:664px" width="21" height="21" viewBox="0 0 20 20"><circle cx="10" cy="10" r="10" fill="#3a8cab"/><path d="M12.9 7.2 A3.9 3.9 0 1 0 12.9 12.8" stroke="#233f4a" stroke-width="2" fill="none"/></svg>
<div class="t" style="left:145.5px;top:664.07px;font-size:20px;line-height:20px;color:#bbbbbb;transform:scaleX(0.9211);transform-origin:0 0;">AsyncService</div>
<svg style="position:absolute;left:118px;top:694px" width="21" height="21" viewBox="0 0 20 20"><circle cx="10" cy="10" r="10" fill="#3a8cab"/><path d="M12.9 7.2 A3.9 3.9 0 1 0 12.9 12.8" stroke="#233f4a" stroke-width="2" fill="none"/></svg>
<div class="t" style="left:145.5px;top:694.07px;font-size:20px;line-height:20px;color:#bbbbbb;transform:scaleX(0.9428);transform-origin:0 0;">BookLoadTask</div>
<svg style="position:absolute;left:118px;top:724px" width="21" height="21" viewBox="0 0 20 20"><circle cx="10" cy="10" r="10" fill="#3a8cab"/><path d="M12.9 7.2 A3.9 3.9 0 1 0 12.9 12.8" stroke="#233f4a" stroke-width="2" fill="none"/></svg>
<div class="t" style="left:145.5px;top:724.07px;font-size:20px;line-height:20px;color:#bbbbbb;transform:scaleX(0.9605);transform-origin:0 0;">CheckBoxActivity</div>
<svg style="position:absolute;left:118px;top:754px" width="21" height="21" viewBox="0 0 20 20"><circle cx="10" cy="10" r="10" fill="#3a8cab"/><path d="M12.9 7.2 A3.9 3.9 0 1 0 12.9 12.8" stroke="#233f4a" stroke-width="2" fill="none"/></svg>
<div class="t" style="left:145.5px;top:754.07px;font-size:20px;line-height:20px;color:#bbbbbb;transform:scaleX(0.9828);transform-origin:0 0;">DatabaseActivity</div>
<svg style="position:absolute;left:118px;top:784px" width="21" height="21" viewBox="0 0 20 20"><circle cx="10" cy="10" r="10" fill="#3a8cab"/><path d="M12.9 7.2 A3.9 3.9 0 1 0 12.9 12.8" stroke="#233f4a" stroke-width="2" fill="none"/></svg>
<div class="t" style="left:145.5px;top:784.07px;font-size:20px;line-height:20px;color:#bbbbbb;transform:scaleX(0.9835);transform-origin:0 0;">DatePickerActivity</div>
<svg style="position:absolute;left:118px;top:814px" width="21" height="21" viewBox="0 0 20 20"><circle cx="10" cy="10" r="10" fill="#3a8cab"/><path d="M12.9 7.2 A3.9 3.9 0 1 0 12.9 12.8" stroke="#233f4a" stroke-width="2" fill="none"/></svg>
<div class="t" style="left:145.5px;top:814.07px;font-size:20px;line-height:20px;color:#bbbbbb;transform:scaleX(1.0009);transform-origin:0 0;">DateUtil</div>
<svg style="position:absolute;left:118px;top:844px" width="21" height="21" viewBox="0 0 20 20"><circle cx="10" cy="10" r="10" fill="#3a8cab"/><path d="M12.9 7.2 A3.9 3.9 0 1 0 12.9 12.8" stroke="#233f4a" stroke-width="2" fill="none"/></svg>
<div class="t" style="left:145.5px;top:844.07px;font-size:20px;line-height:20px;color:#bbbbbb;transform:scaleX(0.9749);transform-origin:0 0;">DrawableShapeActivity</div>
<svg style="position:absolute;left:118px;top:874px" width="21" height="21" viewBox="0 0 20 20"><circle cx="10" cy="10" r="10" fill="#3a8cab"/><path d="M12.9 7.2 A3.9 3.9 0 1 0 12.9 12.8" stroke="#233f4a" stroke-width="2" fill="none"/></svg>
<div class="t" style="left:145.5px;top:874.07px;font-size:20px;line-height:20px;color:#bbbbbb;transform:scaleX(0.9860);transform-origin:0 0;">DrawableStateActivity</div>
<svg style="position:absolute;left:118px;top:904px" width="21" height="21" viewBox="0 0 20 20"><circle cx="10" cy="10" r="10" fill="#3a8cab"/><path d="M12.9 7.2 A3.9 3.9 0 1 0 12.9 12.8" stroke="#233f4a" stroke-width="2" fill="none"/></svg>
<div class="t" style="left:145.5px;top:904.07px;font-size:20px;line-height:20px;color:#bbbbbb;transform:scaleX(0.9991);transform-origin:0 0;">EditBorderActivity</div>
<svg style="position:absolute;left:118px;top:934px" width="21" height="21" viewBox="0 0 20 20"><circle cx="10" cy="10" r="10" fill="#3a8cab"/><path d="M12.9 7.2 A3.9 3.9 0 1 0 12.9 12.8" stroke="#233f4a" stroke-width="2" fill="none"/></svg>
<div class="t" style="left:145.5px;top:934.07px;font-size:20px;line-height:20px;color:#bbbbbb;transform:scaleX(0.9746);transform-origin:0 0;">EditFocusActivity</div>
<svg style="position:absolute;left:118px;top:964px" width="21" height="21" viewBox="0 0 20 20"><circle cx="10" cy="10" r="10" fill="#3a8cab"/><path d="M12.9 7.2 A3.9 3.9 0 1 0 12.9 12.8" stroke="#233f4a" stroke-width="2" fill="none"/></svg>
<div class="t" style="left:145.5px;top:964.07px;font-size:20px;line-height:20px;color:#bbbbbb;transform:scaleX(1.0141);transform-origin:0 0;">EditHideActivity</div>
<svg style="position:absolute;left:118px;top:994px" width="21" height="21" viewBox="0 0 20 20"><circle cx="10" cy="10" r="10" fill="#3a8cab"/><path d="M12.9 7.2 A3.9 3.9 0 1 0 12.9 12.8" stroke="#233f4a" stroke-width="2" fill="none"/></svg>
<div class="t" style="left:145.5px;top:994.07px;font-size:20px;line-height:20px;color:#bbbbbb;transform:scaleX(0.9972);transform-origin:0 0;">EditSimpleActivity</div>
<svg style="position:absolute;left:118px;top:1024px" width="21" height="21" viewBox="0 0 20 20"><circle cx="10" cy="10" r="10" fill="#3a8cab"/><path d="M12.9 7.2 A3.9 3.9 0 1 0 12.9 12.8" stroke="#233f4a" stroke-width="2" fill="none"/></svg>
<div class="t" style="left:145.5px;top:1024.07px;font-size:20px;line-height:20px;color:#bbbbbb;transform:scaleX(0.9860);transform-origin:0 0;">FilePathActivity</div>
<svg style="position:absolute;left:118px;top:1054px" width="21" height="21" viewBox="0 0 20 20"><circle cx="10" cy="10" r="10" fill="#3a8cab"/><path d="M12.9 7.2 A3.9 3.9 0 1 0 12.9 12.8" stroke="#233f4a" stroke-width="2" fill="none"/></svg>
<div class="t" style="left:145.5px;top:1054.07px;font-size:20px;line-height:20px;color:#bbbbbb;transform:scaleX(0.9757);transform-origin:0 0;">FileReadActivity</div>
<svg style="position:absolute;left:118px;top:1084px" width="21" height="21" viewBox="0 0 20 20"><circle cx="10" cy="10" r="10" fill="#3a8cab"/><path d="M12.9 7.2 A3.9 3.9 0 1 0 12.9 12.8" stroke="#233f4a" stroke-width="2" fill="none"/></svg>
<div class="t" style="left:145.5px;top:1084.07px;font-size:20px;line-height:20px;color:#bbbbbb;transform:scaleX(0.9883);transform-origin:0 0;">FileUtil</div>
<svg style="position:absolute;left:118px;top:1114px" width="21" height="21" viewBox="0 0 20 20"><circle cx="10" cy="10" r="10" fill="#3a8cab"/><path d="M12.9 7.2 A3.9 3.9 0 1 0 12.9 12.8" stroke="#233f4a" stroke-width="2" fill="none"/></svg>
<div class="t" style="left:145.5px;top:1114.07px;font-size:20px;line-height:20px;color:#bbbbbb;transform:scaleX(1.0044);transform-origin:0 0;">FileWriteActivity</div>
<svg style="position:absolute;left:118px;top:1144px" width="21" height="21" viewBox="0 0 20 20"><circle cx="10" cy="10" r="10" fill="#3a8cab"/><path d="M12.9 7.2 A3.9 3.9 0 1 0 12.9 12.8" stroke="#233f4a" stroke-width="2" fill="none"/></svg>
<div class="t" style="left:145.5px;top:1144.07px;font-size:20px;line-height:20px;color:#bbbbbb;transform:scaleX(0.9818);transform-origin:0 0;">ImageReadActivity</div>
<svg style="position:absolute;left:118px;top:1174px" width="21" height="21" viewBox="0 0 20 20"><circle cx="10" cy="10" r="10" fill="#3a8cab"/><path d="M12.9 7.2 A3.9 3.9 0 1 0 12.9 12.8" stroke="#233f4a" stroke-width="2" fill="none"/></svg>
<div class="t" style="left:145.5px;top:1174.07px;font-size:20px;line-height:20px;color:#bbbbbb;transform:scaleX(1.0107);transform-origin:0 0;">ImageWriteActivity</div>
<svg style="position:absolute;left:118px;top:1204px" width="21" height="21" viewBox="0 0 20 20"><circle cx="10" cy="10" r="10" fill="#3a8cab"/><path d="M12.9 7.2 A3.9 3.9 0 1 0 12.9 12.8" stroke="#233f4a" stroke-width="2" fill="none"/></svg>
<div class="t" style="left:145.5px;top:1204.07px;font-size:20px;line-height:20px;color:#bbbbbb;transform:scaleX(1.0048);transform-origin:0 0;">LoginForgetActivity</div>
<svg style="position:absolute;left:118px;top:1234px" width="21" height="21" viewBox="0 0 20 20"><circle cx="10" cy="10" r="10" fill="#3a8cab"/><path d="M12.9 7.2 A3.9 3.9 0 1 0 12.9 12.8" stroke="#233f4a" stroke-width="2" fill="none"/></svg>
<div class="t" style="left:145.5px;top:1234.07px;font-size:20px;line-height:20px;color:#bbbbbb;transform:scaleX(1.0207);transform-origin:0 0;">LoginInputActivity</div>
</div>
<div style="position:absolute;left:425px;top:128px;width:12px;height:435px;background:#545658;"></div>
<div style="position:absolute;left:549px;top:1051px;width:1978px;height:33px;background:#323232;"></div>
<div style="position:absolute;left:822px;top:1217px;width:717px;height:31px;background:#3b3c2b;"></div>
<div style="position:absolute;left:1758px;top:128px;width:2px;height:1250px;background:#4b4b4b;"></div>
<div style="position:absolute;left:548px;top:128px;width:2px;height:1250px;background:#505254;"></div>
<div style="position:absolute;left:603px;top:721px;width:1px;height:297px;background:#3b3b3b;"></div>
<div style="position:absolute;left:603px;top:1183px;width:1px;height:198px;background:#3b3b3b;"></div>
<div style="position:absolute;left:651px;top:1348px;width:1px;height:33px;background:#3b3b3b;"></div>
<svg style="position:absolute;left:542px;top:203px;" width="16" height="20" viewBox="0 0 16 20"><path d="M1 1 H14 V12 L7.5 18 L1 12 Z" fill="#313335" stroke="#6a6c6e" stroke-width="1.4"/><path d="M4 7 H11" stroke="#8a8c8e" stroke-width="1.4"/></svg>
<svg style="position:absolute;left:542px;top:398px;" width="16" height="20" viewBox="0 0 16 20"><path d="M1 18 H14 V7 L7.5 1 L1 7 Z" fill="#313335" stroke="#6a6c6e" stroke-width="1.4"/><path d="M4 12 H11" stroke="#8a8c8e" stroke-width="1.4"/></svg>
<svg style="position:absolute;left:542px;top:698px;" width="16" height="20" viewBox="0 0 16 20"><path d="M1 1 H14 V12 L7.5 18 L1 12 Z" fill="#313335" stroke="#6a6c6e" stroke-width="1.4"/><path d="M4 7 H11" stroke="#8a8c8e" stroke-width="1.4"/></svg>
<svg style="position:absolute;left:542px;top:1025px;" width="16" height="20" viewBox="0 0 16 20"><path d="M1 18 H14 V7 L7.5 1 L1 7 Z" fill="#313335" stroke="#6a6c6e" stroke-width="1.4"/><path d="M4 12 H11" stroke="#8a8c8e" stroke-width="1.4"/></svg>
<svg style="position:absolute;left:542px;top:1160px;" width="16" height="20" viewBox="0 0 16 20"><path d="M1 1 H14 V12 L7.5 18 L1 12 Z" fill="#313335" stroke="#6a6c6e" stroke-width="1.4"/><path d="M4 7 H11" stroke="#8a8c8e" stroke-width="1.4"/></svg>
<svg style="position:absolute;left:542px;top:1325px;" width="16" height="20" viewBox="0 0 16 20"><path d="M1 1 H14 V12 L7.5 18 L1 12 Z" fill="#313335" stroke="#6a6c6e" stroke-width="1.4"/><path d="M4 7 H11" stroke="#8a8c8e" stroke-width="1.4"/></svg>
<div style="position:absolute;left:558px;top:1054px;width:3px;height:27px;background:#bbbbbb;"></div>
<div class="code" style="left:457.4px;top:137.8px;font-size:18.5px;line-height:18.5px;letter-spacing:-0.5px;color:#606366">1</div>
<div class="code" style="left:457.4px;top:170.8px;font-size:18.5px;line-height:18.5px;letter-spacing:-0.5px;color:#606366">2</div>
<div class="code" style="left:457.4px;top:203.8px;font-size:18.5px;line-height:18.5px;letter-spacing:-0.5px;color:#606366">3</div>
<div class="code" style="left:457.4px;top:236.8px;font-size:18.5px;line-height:18.5px;letter-spacing:-0.5px;color:#606366">4</div>
<div class="code" style="left:457.4px;top:269.8px;font-size:18.5px;line-height:18.5px;letter-spacing:-0.5px;color:#606366">5</div>
<div class="code" style="left:457.4px;top:302.8px;font-size:18.5px;line-height:18.5px;letter-spacing:-0.5px;color:#606366">6</div>
<div class="code" style="left:457.4px;top:335.8px;font-size:18.5px;line-height:18.5px;letter-spacing:-0.5px;color:#606366">7</div>
<div class="code" style="left:457.4px;top:368.8px;font-size:18.5px;line-height:18.5px;letter-spacing:-0.5px;color:#606366">8</div>
<div class="code" style="left:457.4px;top:401.8px;font-size:18.5px;line-height:18.5px;letter-spacing:-0.5px;color:#606366">9</div>
<div class="code" style="left:446.8px;top:434.8px;font-size:18.5px;line-height:18.5px;letter-spacing:-0.5px;color:#606366">10</div>
<div class="code" style="left:446.8px;top:467.8px;font-size:18.5px;line-height:18.5px;letter-spacing:-0.5px;color:#606366">11</div>
<div class="code" style="left:446.8px;top:500.8px;font-size:18.5px;line-height:18.5px;letter-spacing:-0.5px;color:#606366">12</div>
<div class="code" style="left:446.8px;top:533.8px;font-size:18.5px;line-height:18.5px;letter-spacing:-0.5px;color:#606366">13</div>
<div class="code" style="left:446.8px;top:566.8px;font-size:18.5px;line-height:18.5px;letter-spacing:-0.5px;color:#606366">14</div>
<div class="code" style="left:446.8px;top:599.8px;font-size:18.5px;line-height:18.5px;letter-spacing:-0.5px;color:#606366">15</div>
<div class="code" style="left:446.8px;top:632.8px;font-size:18.5px;line-height:18.5px;letter-spacing:-0.5px;color:#606366">16</div>
<div class="code" style="left:446.8px;top:665.8px;font-size:18.5px;line-height:18.5px;letter-spacing:-0.5px;color:#606366">17</div>
<div class="code" style="left:446.8px;top:698.8px;font-size:18.5px;line-height:18.5px;letter-spacing:-0.5px;color:#606366">18</div>
<div class="code" style="left:446.8px;top:731.8px;font-size:18.5px;line-height:18.5px;letter-spacing:-0.5px;color:#606366">19</div>
<div class="code" style="left:446.8px;top:764.8px;font-size:18.5px;line-height:18.5px;letter-spacing:-0.5px;color:#606366">20</div>
<div class="code" style="left:446.8px;top:797.8px;font-size:18.5px;line-height:18.5px;letter-spacing:-0.5px;color:#606366">21</div>
<div class="code" style="left:446.8px;top:830.8px;font-size:18.5px;line-height:18.5px;letter-spacing:-0.5px;color:#606366">22</div>
<div class="code" style="left:446.8px;top:863.8px;font-size:18.5px;line-height:18.5px;letter-spacing:-0.5px;color:#606366">23</div>
<div class="code" style="left:446.8px;top:896.8px;font-size:18.5px;line-height:18.5px;letter-spacing:-0.5px;color:#606366">24</div>
<div class="code" style="left:446.8px;top:929.8px;font-size:18.5px;line-height:18.5px;letter-spacing:-0.5px;color:#606366">25</div>
<div class="code" style="left:446.8px;top:962.8px;font-size:18.5px;line-height:18.5px;letter-spacing:-0.5px;color:#606366">26</div>
<div class="code" style="left:446.8px;top:995.8px;font-size:18.5px;line-height:18.5px;letter-spacing:-0.5px;color:#606366">27</div>
<div class="code" style="left:446.8px;top:1028.8px;font-size:18.5px;line-height:18.5px;letter-spacing:-0.5px;color:#606366">28</div>
<div class="code" style="left:446.8px;top:1061.8px;font-size:18.5px;line-height:18.5px;letter-spacing:-0.5px;color:#a4a3a3">29</div>
<div class="code" style="left:446.8px;top:1094.8px;font-size:18.5px;line-height:18.5px;letter-spacing:-0.5px;color:#606366">30</div>
<div class="code" style="left:446.8px;top:1127.8px;font-size:18.5px;line-height:18.5px;letter-spacing:-0.5px;color:#606366">31</div>
<div class="code" style="left:446.8px;top:1160.8px;font-size:18.5px;line-height:18.5px;letter-spacing:-0.5px;color:#606366">32</div>
<div class="code" style="left:446.8px;top:1193.8px;font-size:18.5px;line-height:18.5px;letter-spacing:-0.5px;color:#606366">33</div>
<div class="code" style="left:446.8px;top:1226.8px;font-size:18.5px;line-height:18.5px;letter-spacing:-0.5px;color:#606366">34</div>
<div class="code" style="left:446.8px;top:1259.8px;font-size:18.5px;line-height:18.5px;letter-spacing:-0.5px;color:#606366">35</div>
<div class="code" style="left:446.8px;top:1292.8px;font-size:18.5px;line-height:18.5px;letter-spacing:-0.5px;color:#606366">36</div>
<div class="code" style="left:446.8px;top:1325.8px;font-size:18.5px;line-height:18.5px;letter-spacing:-0.5px;color:#606366">37</div>
<div class="code" style="left:446.8px;top:1358.8px;font-size:18.5px;line-height:18.5px;letter-spacing:-0.5px;color:#606366">38</div>
<div class="code" style="left:558.0px;top:136.4px;font-size:21px;line-height:21px;letter-spacing:-0.6px;color:#cc7832;">package</div>
<div class="code" style="left:642.0px;top:136.4px;font-size:21px;line-height:21px;letter-spacing:-0.6px;color:#a9b7c6;"> com.example.myapplication</div>
<div class="code" style="left:954.0px;top:136.4px;font-size:21px;line-height:21px;letter-spacing:-0.6px;color:#cc7832;">;</div>
<div class="code" style="left:558.0px;top:202.4px;font-size:21px;line-height:21px;letter-spacing:-0.6px;color:#cc7832;">import</div>
<div class="code" style="left:630.0px;top:202.4px;font-size:21px;line-height:21px;letter-spacing:-0.6px;color:#a9b7c6;"> androidx.appcompat.app.AppCompatActivity</div>
<div class="code" style="left:1122.0px;top:202.4px;font-size:21px;line-height:21px;letter-spacing:-0.6px;color:#cc7832;">;</div>
<div class="code" style="left:558.0px;top:235.4px;font-size:21px;line-height:21px;letter-spacing:-0.6px;color:#cc7832;">import</div>
<div class="code" style="left:630.0px;top:235.4px;font-size:21px;line-height:21px;letter-spacing:-0.6px;color:#a9b7c6;"> android.os.Bundle</div>
<div class="code" style="left:846.0px;top:235.4px;font-size:21px;line-height:21px;letter-spacing:-0.6px;color:#cc7832;">;</div>
<div class="code" style="left:558.0px;top:268.4px;font-size:21px;line-height:21px;letter-spacing:-0.6px;color:#cc7832;">import</div>
<div class="code" style="left:630.0px;top:268.4px;font-size:21px;line-height:21px;letter-spacing:-0.6px;color:#a9b7c6;"> android.view.View</div>
<div class="code" style="left:846.0px;top:268.4px;font-size:21px;line-height:21px;letter-spacing:-0.6px;color:#cc7832;">;</div>
<div class="code" style="left:558.0px;top:301.4px;font-size:21px;line-height:21px;letter-spacing:-0.6px;color:#cc7832;">import</div>
<div class="code" style="left:630.0px;top:301.4px;font-size:21px;line-height:21px;letter-spacing:-0.6px;color:#a9b7c6;"> android.widget.TextView</div>
<div class="code" style="left:918.0px;top:301.4px;font-size:21px;line-height:21px;letter-spacing:-0.6px;color:#cc7832;">;</div>
<div class="code" style="left:558.0px;top:334.4px;font-size:21px;line-height:21px;letter-spacing:-0.6px;color:#cc7832;">import</div>
<div class="code" style="left:630.0px;top:334.4px;font-size:21px;line-height:21px;letter-spacing:-0.6px;color:#a9b7c6;"> com.example.myapplication.dao.BookDao</div>
<div class="code" style="left:1086.0px;top:334.4px;font-size:21px;line-height:21px;letter-spacing:-0.6px;color:#cc7832;">;</div>
<div class="code" style="left:558.0px;top:367.4px;font-size:21px;line-height:21px;letter-spacing:-0.6px;color:#cc7832;">import</div>
<div class="code" style="left:630.0px;top:367.4px;font-size:21px;line-height:21px;letter-spacing:-0.6px;color:#a9b7c6;"> com.example.myapplication.entity.BookInfo</div>
<div class="code" style="left:1134.0px;top:367.4px;font-size:21px;line-height:21px;letter-spacing:-0.6px;color:#cc7832;">;</div>
<div class="code" style="left:558.0px;top:400.4px;font-size:21px;line-height:21px;letter-spacing:-0.6px;color:#cc7832;">import</div>
<div class="code" style="left:630.0px;top:400.4px;font-size:21px;line-height:21px;letter-spacing:-0.6px;color:#a9b7c6;"> java.util.List</div>
<div class="code" style="left:810.0px;top:400.4px;font-size:21px;line-height:21px;letter-spacing:-0.6px;color:#cc7832;">;</div>
<div class="code" style="left:558.0px;top:466.4px;font-size:21px;line-height:21px;letter-spacing:-0.6px;color:#cc7832;">public class</div>
<div class="code" style="left:702.0px;top:466.4px;font-size:21px;line-height:21px;letter-spacing:-0.6px;color:#a9b7c6;"> RoomReadActivity </div>
<div class="code" style="left:918.0px;top:466.4px;font-size:21px;line-height:21px;letter-spacing:-0.6px;color:#cc7832;">extends</div>
<div class="code" style="left:1002.0px;top:466.4px;font-size:21px;line-height:21px;letter-spacing:-0.6px;color:#a9b7c6;"> AppCompatActivity </div>
<div class="code" style="left:1230.0px;top:466.4px;font-size:21px;line-height:21px;letter-spacing:-0.6px;color:#cc7832;">implements</div>
<div class="code" style="left:1350.0px;top:466.4px;font-size:21px;line-height:21px;letter-spacing:-0.6px;color:#a9b7c6;"> View.OnClickListener</div>
<div class="code" style="left:558.0px;top:499.4px;font-size:21px;line-height:21px;letter-spacing:-0.6px;color:#a9b7c6;">{</div>
<div class="code" style="left:558.0px;top:532.4px;font-size:21px;line-height:21px;letter-spacing:-0.6px;color:#cc7832;">    private</div>
<div class="code" style="left:690.0px;top:532.4px;font-size:21px;line-height:21px;letter-spacing:-0.6px;color:#a9b7c6;"> TextView </div>
<div class="code" style="left:810.0px;top:532.4px;font-size:21px;line-height:21px;letter-spacing:-0.6px;color:#9876aa;">tv_room</div>
<div class="code" style="left:894.0px;top:532.4px;font-size:21px;line-height:21px;letter-spacing:-0.6px;color:#cc7832;">;</div>
<div class="code" style="left:558.0px;top:565.4px;font-size:21px;line-height:21px;letter-spacing:-0.6px;color:#cc7832;">    private</div>
<div class="code" style="left:690.0px;top:565.4px;font-size:21px;line-height:21px;letter-spacing:-0.6px;color:#a9b7c6;"> BookDao </div>
<div class="code" style="left:798.0px;top:565.4px;font-size:21px;line-height:21px;letter-spacing:-0.6px;color:#9876aa;">bookDao</div>
<div class="code" style="left:882.0px;top:565.4px;font-size:21px;line-height:21px;letter-spacing:-0.6px;color:#cc7832;">;</div>
<div class="code" style="left:894.0px;top:565.4px;font-size:21px;line-height:21px;letter-spacing:-0.6px;color:#808080;"> // </div>
<div class="t" style="left:942.0px;top:565.5px;width:227.4px;font-size:18px;line-height:19px;color:#808080;font-family:'Liberation Serif',serif;letter-spacing:0.95px">声明一个书籍的持久化对象</div>
<div class="code" style="left:558.0px;top:631.4px;font-size:21px;line-height:21px;letter-spacing:-0.6px;color:#bbb529;">    @Override</div>
<div class="code" style="left:558.0px;top:664.4px;font-size:21px;line-height:21px;letter-spacing:-0.6px;color:#cc7832;">    protected void</div>
<div class="code" style="left:774.0px;top:664.4px;font-size:21px;line-height:21px;letter-spacing:-0.6px;color:#a9b7c6;"> </div>
<div class="code" style="left:786.0px;top:664.4px;font-size:21px;line-height:21px;letter-spacing:-0.6px;color:#ffc66d;">onCreate</div>
<div class="code" style="left:882.0px;top:664.4px;font-size:21px;line-height:21px;letter-spacing:-0.6px;color:#a9b7c6;">(Bundle savedInstanceState)</div>
<div class="code" style="left:558.0px;top:697.4px;font-size:21px;line-height:21px;letter-spacing:-0.6px;color:#a9b7c6;">    {</div>
<div class="code" style="left:558.0px;top:730.4px;font-size:21px;line-height:21px;letter-spacing:-0.6px;color:#cc7832;">        super</div>
<div class="code" style="left:714.0px;top:730.4px;font-size:21px;line-height:21px;letter-spacing:-0.6px;color:#a9b7c6;">.onCreate(savedInstanceState)</div>
<div class="code" style="left:1062.0px;top:730.4px;font-size:21px;line-height:21px;letter-spacing:-0.6px;color:#cc7832;">;</div>
<div class="code" style="left:558.0px;top:763.4px;font-size:21px;line-height:21px;letter-spacing:-0.6px;color:#a9b7c6;">        setContentView(R.layout.</div>
<div class="code" style="left:942.0px;top:763.4px;font-size:21px;line-height:21px;letter-spacing:-0.6px;color:#9876aa;font-style:italic;">activity_room_read</div>
<div class="code" style="left:1158.0px;top:763.4px;font-size:21px;line-height:21px;letter-spacing:-0.6px;color:#a9b7c6;">)</div>
<div class="code" style="left:1170.0px;top:763.4px;font-size:21px;line-height:21px;letter-spacing:-0.6px;color:#cc7832;">;</div>
<div class="code" style="left:558.0px;top:829.4px;font-size:21px;line-height:21px;letter-spacing:-0.6px;color:#9876aa;">        tv_room</div>
<div class="code" style="left:738.0px;top:829.4px;font-size:21px;line-height:21px;letter-spacing:-0.6px;color:#a9b7c6;"> = findViewById(R.id.</div>
<div class="code" style="left:990.0px;top:829.4px;font-size:21px;line-height:21px;letter-spacing:-0.6px;color:#9876aa;font-style:italic;">tv_room</div>
<div class="code" style="left:1074.0px;top:829.4px;font-size:21px;line-height:21px;letter-spacing:-0.6px;color:#a9b7c6;">)</div>
<div class="code" style="left:1086.0px;top:829.4px;font-size:21px;line-height:21px;letter-spacing:-0.6px;color:#cc7832;">;</div>
<div class="code" style="left:558.0px;top:862.4px;font-size:21px;line-height:21px;letter-spacing:-0.6px;color:#a9b7c6;">        findViewById(R.id.</div>
<div class="code" style="left:870.0px;top:862.4px;font-size:21px;line-height:21px;letter-spacing:-0.6px;color:#9876aa;font-style:italic;">btn_delete</div>
<div class="code" style="left:990.0px;top:862.4px;font-size:21px;line-height:21px;letter-spacing:-0.6px;color:#a9b7c6;">).setOnClickListener(</div>
<div class="code" style="left:1242.0px;top:862.4px;font-size:21px;line-height:21px;letter-spacing:-0.6px;color:#cc7832;">this</div>
<div class="code" style="left:1290.0px;top:862.4px;font-size:21px;line-height:21px;letter-spacing:-0.6px;color:#a9b7c6;">)</div>
<div class="code" style="left:1302.0px;top:862.4px;font-size:21px;line-height:21px;letter-spacing:-0.6px;color:#cc7832;">;</div>
<div class="code" style="left:558.0px;top:928.4px;font-size:21px;line-height:21px;letter-spacing:-0.6px;color:#808080;">        // </div>
<div class="t" style="left:690.0px;top:928.5px;width:18.9px;font-size:18px;line-height:19px;color:#808080;font-family:'Liberation Serif',serif;letter-spacing:0.95px">从</div>
<div class="code" style="left:709.0px;top:928.4px;font-size:21px;line-height:21px;letter-spacing:-0.6px;color:#808080;">App</div>
<div class="t" style="left:745.0px;top:928.5px;width:284.2px;font-size:18px;line-height:19px;color:#808080;font-family:'Liberation Serif',serif;letter-spacing:0.95px">实例中获取唯一的书籍持久化对象</div>
<div class="code" style="left:558.0px;top:961.4px;font-size:21px;line-height:21px;letter-spacing:-0.6px;color:#9876aa;">        bookDao</div>
<div class="code" style="left:738.0px;top:961.4px;font-size:21px;line-height:21px;letter-spacing:-0.6px;color:#a9b7c6;"> = MainApplication.</div>
<div class="code" style="left:966.0px;top:961.4px;font-size:21px;line-height:21px;letter-spacing:-0.6px;color:#a9b7c6;font-style:italic;">getInstance</div>
<div class="code" style="left:1098.0px;top:961.4px;font-size:21px;line-height:21px;letter-spacing:-0.6px;color:#a9b7c6;">().getBookDB().bookDao()</div>
<div class="code" style="left:1386.0px;top:961.4px;font-size:21px;line-height:21px;letter-spacing:-0.6px;color:#cc7832;">;</div>
<div class="code" style="left:558.0px;top:994.4px;font-size:21px;line-height:21px;letter-spacing:-0.6px;color:#a9b7c6;">        readRoom()</div>
<div class="code" style="left:774.0px;top:994.4px;font-size:21px;line-height:21px;letter-spacing:-0.6px;color:#cc7832;">;</div>
<div class="code" style="left:786.0px;top:994.4px;font-size:21px;line-height:21px;letter-spacing:-0.6px;color:#808080;"> // </div>
<div class="t" style="left:834.0px;top:994.5px;width:246.3px;font-size:18px;line-height:19px;color:#808080;font-family:'Liberation Serif',serif;letter-spacing:0.95px">读取数据库中的所有书籍记录</div>
<div class="code" style="left:558.0px;top:1027.4px;font-size:21px;line-height:21px;letter-spacing:-0.6px;color:#a9b7c6;">    }</div>
<div class="code" style="left:558.0px;top:1093.4px;font-size:21px;line-height:21px;letter-spacing:-0.6px;color:#808080;">    // </div>
<div class="t" style="left:642.0px;top:1093.5px;width:246.3px;font-size:18px;line-height:19px;color:#808080;font-family:'Liberation Serif',serif;letter-spacing:0.95px">读取数据库中的所有书籍记录</div>
<div class="code" style="left:558.0px;top:1126.4px;font-size:21px;line-height:21px;letter-spacing:-0.6px;color:#cc7832;">    private void</div>
<div class="code" style="left:750.0px;top:1126.4px;font-size:21px;line-height:21px;letter-spacing:-0.6px;color:#a9b7c6;"> </div>
<div class="code" style="left:762.0px;top:1126.4px;font-size:21px;line-height:21px;letter-spacing:-0.6px;color:#ffc66d;">readRoom</div>
<div class="code" style="left:858.0px;top:1126.4px;font-size:21px;line-height:21px;letter-spacing:-0.6px;color:#a9b7c6;">()</div>
<div class="code" style="left:558.0px;top:1159.4px;font-size:21px;line-height:21px;letter-spacing:-0.6px;color:#a9b7c6;">    {</div>
<div class="code" style="left:558.0px;top:1192.4px;font-size:21px;line-height:21px;letter-spacing:-0.6px;color:#a9b7c6;">        List&lt;BookInfo&gt; bookList = </div>
<div class="code" style="left:966.0px;top:1192.4px;font-size:21px;line-height:21px;letter-spacing:-0.6px;color:#9876aa;">bookDao</div>
<div class="code" style="left:1050.0px;top:1192.4px;font-size:21px;line-height:21px;letter-spacing:-0.6px;color:#a9b7c6;">.queryAllBook()</div>
<div class="code" style="left:1230.0px;top:1192.4px;font-size:21px;line-height:21px;letter-spacing:-0.6px;color:#cc7832;">;</div>
<div class="code" style="left:1242.0px;top:1192.4px;font-size:21px;line-height:21px;letter-spacing:-0.6px;color:#808080;"> // </div>
<div class="t" style="left:1290.0px;top:1192.5px;width:151.6px;font-size:18px;line-height:19px;color:#808080;font-family:'Liberation Serif',serif;letter-spacing:0.95px">获取所有书籍记录</div>
<div class="code" style="left:558.0px;top:1225.4px;font-size:21px;line-height:21px;letter-spacing:-0.6px;color:#a9b7c6;">        String </div>
<div class="code" style="left:738.0px;top:1225.4px;font-size:21px;line-height:21px;letter-spacing:-0.6px;color:#a9b7c6;text-decoration:underline;text-underline-offset:3px;">desc</div>
<div class="code" style="left:786.0px;top:1225.4px;font-size:21px;line-height:21px;letter-spacing:-0.6px;color:#a9b7c6;"> = </div>
<div class="code" style="left:822.0px;top:1225.4px;font-size:21px;line-height:21px;letter-spacing:-0.6px;color:#a9b7c6;">String.</div>
<div class="code" style="left:906.0px;top:1225.4px;font-size:21px;line-height:21px;letter-spacing:-0.6px;color:#a9b7c6;font-style:italic;">format</div>
<div class="code" style="left:978.0px;top:1225.4px;font-size:21px;line-height:21px;letter-spacing:-0.6px;color:#a9b7c6;">(</div>
<div class="code" style="left:990.0px;top:1225.4px;font-size:21px;line-height:21px;letter-spacing:-0.6px;color:#6a8759;">&quot;</div>
<div class="t" style="left:1002.0px;top:1225.5px;width:113.7px;font-size:18px;line-height:19px;color:#6a8759;font-family:'Liberation Serif',serif;letter-spacing:0.95px">数据库查询到</div>
<div class="code" style="left:1115.7px;top:1225.4px;font-size:21px;line-height:21px;letter-spacing:-0.6px;color:#6a8759;">%d</div>
<div class="t" style="left:1139.7px;top:1225.5px;width:170.5px;font-size:18px;line-height:19px;color:#6a8759;font-family:'Liberation Serif',serif;letter-spacing:0.95px">条记录，详情如下：</div>
<div class="code" style="left:1310.2px;top:1225.4px;font-size:21px;line-height:21px;letter-spacing:-0.6px;color:#6a8759;">&quot;</div>
<div class="code" style="left:1322.2px;top:1225.4px;font-size:21px;line-height:21px;letter-spacing:-0.6px;color:#cc7832;">, </div>
<div class="code" style="left:1346.2px;top:1225.4px;font-size:21px;line-height:21px;letter-spacing:-0.6px;color:#a9b7c6;">bookList.size())</div>
<div class="code" style="left:1538.2px;top:1225.4px;font-size:21px;line-height:21px;letter-spacing:-0.6px;color:#cc7832;">;</div>
<div class="code" style="left:558.0px;top:1291.4px;font-size:21px;line-height:21px;letter-spacing:-0.6px;color:#cc7832;">        for</div>
<div class="code" style="left:690.0px;top:1291.4px;font-size:21px;line-height:21px;letter-spacing:-0.6px;color:#a9b7c6;"> (</div>
<div class="code" style="left:714.0px;top:1291.4px;font-size:21px;line-height:21px;letter-spacing:-0.6px;color:#cc7832;">int</div>
<div class="code" style="left:750.0px;top:1291.4px;font-size:21px;line-height:21px;letter-spacing:-0.6px;color:#a9b7c6;"> </div>
<div class="code" style="left:762.0px;top:1291.4px;font-size:21px;line-height:21px;letter-spacing:-0.6px;color:#a9b7c6;text-decoration:underline;text-underline-offset:3px;">i</div>
<div class="code" style="left:774.0px;top:1291.4px;font-size:21px;line-height:21px;letter-spacing:-0.6px;color:#a9b7c6;"> = </div>
<div class="code" style="left:810.0px;top:1291.4px;font-size:21px;line-height:21px;letter-spacing:-0.6px;color:#6897bb;">0</div>
<div class="code" style="left:822.0px;top:1291.4px;font-size:21px;line-height:21px;letter-spacing:-0.6px;color:#cc7832;">; </div>
<div class="code" style="left:846.0px;top:1291.4px;font-size:21px;line-height:21px;letter-spacing:-0.6px;color:#a9b7c6;text-decoration:underline;text-underline-offset:3px;">i</div>
<div class="code" style="left:858.0px;top:1291.4px;font-size:21px;line-height:21px;letter-spacing:-0.6px;color:#a9b7c6;"> &lt; bookList.size()</div>
<div class="code" style="left:1074.0px;top:1291.4px;font-size:21px;line-height:21px;letter-spacing:-0.6px;color:#cc7832;">; </div>
<div class="code" style="left:1098.0px;top:1291.4px;font-size:21px;line-height:21px;letter-spacing:-0.6px;color:#a9b7c6;text-decoration:underline;text-underline-offset:3px;">i</div>
<div class="code" style="left:1110.0px;top:1291.4px;font-size:21px;line-height:21px;letter-spacing:-0.6px;color:#a9b7c6;">++)</div>
<div class="code" style="left:558.0px;top:1324.4px;font-size:21px;line-height:21px;letter-spacing:-0.6px;color:#a9b7c6;">        {</div>
<div class="code" style="left:558.0px;top:1357.4px;font-size:21px;line-height:21px;letter-spacing:-0.6px;color:#a9b7c6;">            BookInfo info = bookList.get(</div>
<div class="code" style="left:1050.0px;top:1357.4px;font-size:21px;line-height:21px;letter-spacing:-0.6px;color:#a9b7c6;text-decoration:underline;text-underline-offset:3px;">i</div>
<div class="code" style="left:1062.0px;top:1357.4px;font-size:21px;line-height:21px;letter-spacing:-0.6px;color:#a9b7c6;">)</div>
<div class="code" style="left:1074.0px;top:1357.4px;font-size:21px;line-height:21px;letter-spacing:-0.6px;color:#cc7832;">;</div>
<svg style="position:absolute;left:500px;top:461px;" width="28" height="28" viewBox="0 0 28 28"><path d="M9.5 1.5 H22.5 V14 H4.5 V7 Z" fill="#9aa7b0"/><path d="M4.5 6 L8.5 1.5 V6 Z" fill="#9aa7b0"/><rect x="1.5" y="15" width="25.5" height="12" fill="#cc5f25"/><path d="M10.5 17.5 L7 21 L10.5 24.5 M17.5 17.5 L21 21 L17.5 24.5" fill="none" stroke="#3a2418" stroke-width="1.4"/></svg>
<svg style="position:absolute;left:479px;top:661px;" width="23" height="23" viewBox="0 0 23 23"><circle cx="7.5" cy="11" r="5.8" fill="none" stroke="#3d9cc8" stroke-width="2.8"/><circle cx="7.5" cy="11" r="1.3" fill="#3d9cc8"/><path d="M17 22 V4" stroke="#c75450" stroke-width="1.8"/><path d="M13 6 L17 0.5 L21 6 Z" fill="#c75450"/></svg>
<svg style="position:absolute;left:2422px;top:137px;" width="20" height="18" viewBox="0 0 20 18"><path d="M10 1 L19.5 17.5 H0.5 Z" fill="#d3a21a"/><rect x="9" y="6" width="2.2" height="6" fill="#2b2b2b"/><rect x="9" y="13.5" width="2.2" height="2.2" fill="#2b2b2b"/></svg>
<div class="t" style="left:2444.0px;top:138.07px;font-size:20px;line-height:20px;color:#a9b7c6;transform:scaleX(0.9889);transform-origin:0 0;">3</div>
<svg style="position:absolute;left:2471px;top:141px;" width="14" height="9" viewBox="0 0 14 9"><path d="M1 8 L7 1.5 L13 8" fill="none" stroke="#afb1b3" stroke-width="1.8"/></svg>
<svg style="position:absolute;left:2503px;top:143px;" width="14" height="9" viewBox="0 0 14 9"><path d="M1 1 L7 7.5 L13 1" fill="none" stroke="#afb1b3" stroke-width="1.8"/></svg>
<div style="position:absolute;left:2514px;top:168px;width:12px;height:642px;background:#4d4d4d;"></div>
<div style="position:absolute;left:2507px;top:730px;width:20px;height:3px;background:#c9a023;"></div>
<div style="position:absolute;left:2507px;top:814px;width:20px;height:3px;background:#c9a023;"></div>
<div style="position:absolute;left:2507px;top:883px;width:20px;height:3px;background:#c9a023;"></div>
<svg style="position:absolute;left:2533px;top:125px;" width="22" height="0" viewBox="0 0 22 0"></svg>
<div class="t" style="left:2517.3px;top:142.5px;width:52.5px;height:17.5px;font-size:17.5px;line-height:17.5px;color:#bbbbbb;transform:rotate(90deg) scaleX(0.9424);transform-origin:50% 50%;text-align:left">Gradle</div>
<svg style="position:absolute;left:2534px;top:101px;" width="21" height="16" viewBox="0 0 21 16"><path d="M0.5 14.5 Q0.5 6 5.5 3.2 Q9.5 1.5 13 3.2 Q14.8 4 15.6 2.2 Q17 0 19 1 Q20.5 2.5 19.5 5.5 Q17.8 9 14.8 10.8 L14.5 14.5 L12.3 14.5 Q11.6 12.4 10.4 12.4 Q9.2 12.4 8.6 14.5 L6.6 14.5 Q6 12.4 4.7 12.4 Q3.5 12.4 2.8 14.5 Z" fill="#afb1b3"/></svg>
<svg style="position:absolute;left:2535px;top:208px;" width="18" height="24" viewBox="0 0 18 24"><rect x="1" y="1" width="10" height="14" rx="1" fill="none" stroke="#afb1b3" stroke-width="1.8"/><rect x="7" y="7" width="10" height="16" rx="1.5" fill="#3c3f41" stroke="#afb1b3" stroke-width="1.8"/><rect x="9" y="18" width="6" height="2" fill="#afb1b3"/></svg>
<div class="t" style="left:2479.9px;top:290.0px;width:127.4px;height:17.5px;font-size:17.5px;line-height:17.5px;color:#bbbbbb;transform:rotate(90deg) scaleX(0.9613);transform-origin:50% 50%;text-align:left">Device Manager</div>
<svg style="position:absolute;left:2535px;top:1143px;" width="18" height="21" viewBox="0 0 18 21"><rect x="1" y="1" width="15" height="19" rx="2" fill="none" stroke="#afb1b3" stroke-width="1.8"/><rect x="5" y="15" width="7" height="2" fill="#afb1b3"/></svg>
<div class="t" style="left:2465.3px;top:1235.8px;width:156.6px;height:17.5px;font-size:17.5px;line-height:17.5px;color:#bbbbbb;transform:rotate(90deg) scaleX(0.9260);transform-origin:50% 50%;text-align:left">Device File Explorer</div>
<svg style="position:absolute;left:2535px;top:1353px;" width="18" height="21" viewBox="0 0 18 21"><path d="M12 1 H2 V15 H5" fill="none" stroke="#afb1b3" stroke-width="1.8"/><rect x="9" y="5" width="7" height="12" fill="none" stroke="#afb1b3" stroke-width="1.6"/><path d="M8 20 H17" stroke="#afb1b3" stroke-width="1.6"/></svg>
<div class="t" style="left:2508.6px;top:1405.8px;width:70.0px;height:17.5px;font-size:17.5px;line-height:17.5px;color:#bbbbbb;transform:rotate(90deg) scaleX(0.9568);transform-origin:50% 50%;text-align:left">Emulator</div>
<div class="t" style="left:42.0px;top:1389.07px;font-size:20px;line-height:20px;color:#bbbbbb;transform:scaleX(0.9575);transform-origin:0 0;">Logcat</div>
<svg style="position:absolute;left:2459px;top:1388px" width="20" height="20" viewBox="0 0 20 20"><circle cx="10" cy="10" r="7.3" fill="#afb1b3"/><rect x="7.4" y="0" width="5.2" height="20" rx="0.8" fill="#afb1b3" transform="rotate(0 10 10)"/><rect x="7.4" y="0" width="5.2" height="20" rx="0.8" fill="#afb1b3" transform="rotate(60 10 10)"/><rect x="7.4" y="0" width="5.2" height="20" rx="0.8" fill="#afb1b3" transform="rotate(120 10 10)"/><circle cx="10" cy="10" r="3" fill="#3c3f41"/></svg>
<div style="position:absolute;left:2499px;top:1397px;width:19px;height:3px;background:#afb1b3;"></div>
<div style="position:absolute;left:47px;top:1433px;width:350px;height:40px;background:transparent;border:1.5px solid #5e6062;border-radius:4px;"></div>
<svg style="position:absolute;left:61px;top:1441px;" width="14" height="22" viewBox="0 0 14 22"><rect x="1.5" y="1.5" width="11" height="18" rx="1.5" fill="none" stroke="#afb1b3" stroke-width="2"/></svg>
<div class="t" style="left:83.5px;top:1441.07px;font-size:20px;line-height:20px;color:#bbbbbb;transform:scaleX(0.9270);transform-origin:0 0;">HUAWEI EDI-AL10</div>
<div style="position:absolute;left:248px;top:1435px;width:117px;height:30px;overflow:hidden">
<div class="t" style="left:0.0px;top:6.07px;font-size:20px;line-height:20px;color:#858789;transform:scaleX(1.0086);transform-origin:0 0;">Android 8.0.0</div>
</div>
<svg style="position:absolute;left:373px;top:1448px;" width="15" height="9" viewBox="0 0 15 9"><path d="M0.5 0.5 H14.5 L7.5 8.5 Z" fill="#a0a2a4"/></svg>
<div style="position:absolute;left:416px;top:1433px;width:350px;height:40px;background:transparent;border:1.5px solid #5e6062;border-radius:4px;"></div>
<div class="t" style="left:426.0px;top:1441.07px;font-size:20px;line-height:20px;color:#bbbbbb;transform:scaleX(0.9478);transform-origin:0 0;">com.example.</div>
<div class="t" style="left:544.0px;top:1441.07px;font-size:20px;line-height:20px;color:#bbbbbb;font-weight:bold;transform:scaleX(0.9370);transform-origin:0 0;">myapplication</div>
<div style="position:absolute;left:675px;top:1435px;width:57px;height:30px;overflow:hidden">
<div class="t" style="left:0.0px;top:6.07px;font-size:20px;line-height:20px;color:#858789;transform:scaleX(0.9864);transform-origin:0 0;">(15659)</div>
</div>
<svg style="position:absolute;left:742px;top:1448px;" width="15" height="9" viewBox="0 0 15 9"><path d="M0.5 0.5 H14.5 L7.5 8.5 Z" fill="#a0a2a4"/></svg>
<div style="position:absolute;left:793px;top:1433px;width:132px;height:40px;background:transparent;border:1.5px solid #5e6062;border-radius:4px;"></div>
<div class="t" style="left:802.5px;top:1441.07px;font-size:20px;line-height:20px;color:#bbbbbb;transform:scaleX(0.9129);transform-origin:0 0;">Verbose</div>
<svg style="position:absolute;left:900px;top:1448px;" width="15" height="9" viewBox="0 0 15 9"><path d="M0.5 0.5 H14.5 L7.5 8.5 Z" fill="#a0a2a4"/></svg>
<div style="position:absolute;left:944px;top:1433px;width:1092px;height:40px;background:#45494a;border:1.5px solid #646464;border-radius:4px;"></div>
<svg style="position:absolute;left:951px;top:1441px;" width="24" height="20" viewBox="0 0 24 20"><circle cx="8" cy="8" r="6" fill="none" stroke="#8c8e90" stroke-width="1.8"/><path d="M12.5 12.5 L17 17" stroke="#8c8e90" stroke-width="2"/><path d="M17 8 H23 L20 11.5 Z" fill="#8c8e90"/></svg>
<div style="position:absolute;left:2054px;top:1441px;width:20px;height:20px;background:#43494a;border:1.5px solid #6b6b6b;border-radius:3px;"></div>
<svg style="position:absolute;left:2056px;top:1443px;" width="16" height="16" viewBox="0 0 16 16"><path d="M3 8.5 L6.5 12 L13.5 3.5" fill="none" stroke="#c8c8c8" stroke-width="2.2"/></svg>
<div class="t" style="left:2084.5px;top:1441.07px;font-size:20px;line-height:20px;color:#bbbbbb;transform:scaleX(0.9167);transform-origin:0 0;">Regex</div>
<div style="position:absolute;left:2164px;top:1433px;width:350px;height:40px;background:transparent;border:1.5px solid #5e6062;border-radius:4px;"></div>
<div class="t" style="left:2173.5px;top:1441.07px;font-size:20px;line-height:20px;color:#bbbbbb;transform:scaleX(0.9725);transform-origin:0 0;">Show only selected application</div>
<svg style="position:absolute;left:2490px;top:1448px;" width="15" height="9" viewBox="0 0 15 9"><path d="M0.5 0.5 H14.5 L7.5 8.5 Z" fill="#a0a2a4"/></svg>
<div style="position:absolute;left:0px;top:1464px;width:2560px;height:59px;background:#3c3f41;"></div>
<div style="position:absolute;left:0px;top:1464px;width:2560px;height:1px;background:#2f3133;"></div>
<div style="position:absolute;left:0px;top:1497px;width:2560px;height:1px;background:#34373a;"></div>
<div style="position:absolute;left:1024px;top:1465px;width:107px;height:32px;background:#2c2e30;"></div>
<div class="t" style="left:73.9px;top:1474.76px;font-size:18px;line-height:18px;color:#bbbbbb;transform:scaleX(0.9759);transform-origin:0 0;">Version Control</div>
<div class="t" style="left:251.4px;top:1474.76px;font-size:18px;line-height:18px;color:#bbbbbb;transform:scaleX(0.9057);transform-origin:0 0;">TODO</div>
<div class="t" style="left:353.6px;top:1474.76px;font-size:18px;line-height:18px;color:#bbbbbb;transform:scaleX(0.9431);transform-origin:0 0;">Problems</div>
<div class="t" style="left:481.0px;top:1474.76px;font-size:18px;line-height:18px;color:#bbbbbb;transform:scaleX(0.9894);transform-origin:0 0;">Terminal</div>
<div class="t" style="left:602.0px;top:1474.76px;font-size:18px;line-height:18px;color:#bbbbbb;transform:scaleX(0.9718);transform-origin:0 0;">Build</div>
<div class="t" style="left:694.3px;top:1474.76px;font-size:18px;line-height:18px;color:#bbbbbb;transform:scaleX(0.9751);transform-origin:0 0;">Profiler</div>
<div class="t" style="left:808.6px;top:1474.76px;font-size:18px;line-height:18px;color:#bbbbbb;transform:scaleX(0.9716);transform-origin:0 0;">App Inspection</div>
<div class="t" style="left:982.0px;top:1474.76px;font-size:18px;line-height:18px;color:#bbbbbb;transform:scaleX(0.9479);transform-origin:0 0;">Run</div>
<div class="t" style="left:1066.0px;top:1474.76px;font-size:18px;line-height:18px;color:#ffffff;transform:scaleX(0.9622);transform-origin:0 0;">Logcat</div>
<svg style="position:absolute;left:51px;top:1472px;" width="16" height="20" viewBox="0 0 16 20"><path d="M4 3 V17 M4 12 Q11 11 11 5" fill="none" stroke="#afb1b3" stroke-width="2"/><circle cx="4" cy="3" r="2.2" fill="#afb1b3"/><circle cx="4" cy="17" r="2.2" fill="#afb1b3"/><circle cx="11.5" cy="5" r="2.2" fill="#afb1b3"/></svg>
<svg style="position:absolute;left:229px;top:1475px;" width="18" height="18" viewBox="0 0 18 18"><rect x="1" y="2" width="3" height="3" fill="#afb1b3"/><rect x="6" y="2" width="11" height="3" fill="#afb1b3"/><rect x="1" y="7.5" width="3" height="3" fill="#afb1b3"/><rect x="6" y="7.5" width="11" height="3" fill="#afb1b3"/><rect x="1" y="13" width="3" height="3" fill="#afb1b3"/><rect x="6" y="13" width="11" height="3" fill="#afb1b3"/></svg>
<svg style="position:absolute;left:330px;top:1473px;" width="18" height="18" viewBox="0 0 18 18"><circle cx="9" cy="9" r="8.5" fill="#db5c5c"/><rect x="7.8" y="3.5" width="2.4" height="7" fill="#3c3f41"/><rect x="7.8" y="12" width="2.4" height="2.4" fill="#3c3f41"/></svg>
<svg style="position:absolute;left:456px;top:1473px;" width="18" height="18" viewBox="0 0 18 18"><rect x="0.5" y="0.5" width="17" height="16" fill="#afb1b3"/><path d="M3.5 4 L7.5 7.5 L3.5 11" fill="none" stroke="#3c3f41" stroke-width="1.6"/><rect x="8.5" y="11.5" width="6" height="1.6" fill="#3c3f41"/></svg>
<svg style="position:absolute;left:577px;top:1472px;" width="20" height="22" viewBox="0 0 20 22"><path d="M2 6 L7 1.5 L11 5 L10 6 L8 5 L6 7 L4.5 7.5 Z" fill="#afb1b3"/><path d="M7.5 6 L18.5 18" stroke="#afb1b3" stroke-width="3.2"/></svg>
<svg style="position:absolute;left:668px;top:1473px;" width="22" height="18" viewBox="0 0 22 18"><path d="M2.5 15 A8.5 8.5 0 0 1 19.5 15" fill="none" stroke="#afb1b3" stroke-width="2.8"/><path d="M9 14 L14 7" stroke="#afb1b3" stroke-width="2.6"/></svg>
<svg style="position:absolute;left:784px;top:1473px;" width="17" height="22" viewBox="0 0 17 22"><rect x="3" y="3" width="11" height="13" rx="4" fill="#afb1b3"/><path d="M0 8 H17 M0 12 H17 M5 1 L6.5 3 M12 1 L10.5 3" stroke="#afb1b3" stroke-width="1.6"/><rect x="6" y="16" width="5" height="5" fill="#afb1b3"/></svg>
<svg style="position:absolute;left:959px;top:1475px;" width="14" height="16" viewBox="0 0 14 16"><path d="M1 1 L13 8 L1 15 Z" fill="#afb1b3"/></svg>
<svg style="position:absolute;left:1042px;top:1476px;" width="17" height="16" viewBox="0 0 17 16"><rect x="0" y="1" width="16.5" height="3" fill="#c8c8c8"/><rect x="0" y="6.5" width="8" height="3" fill="#c8c8c8"/><rect x="0" y="12" width="12" height="3" fill="#c8c8c8"/></svg>
<svg style="position:absolute;left:2221px;top:1473px;" width="20" height="20" viewBox="0 0 20 20"><circle cx="10" cy="10" r="9.8" fill="#f0a732"/><text x="10" y="15" font-size="13" font-family="Liberation Sans" font-weight="bold" fill="#2b2b2b" text-anchor="middle">9</text></svg>
<div class="t" style="left:2248.0px;top:1474.76px;font-size:18px;line-height:18px;color:#bbbbbb;transform:scaleX(0.9869);transform-origin:0 0;">Event Log</div>
<svg style="position:absolute;left:7px;top:1503px;" width="22" height="20" viewBox="0 0 22 20"><rect x="6.5" y="2.5" width="12.5" height="12.5" fill="none" stroke="#afb1b3" stroke-width="1.8"/><path d="M2 6 V19 H15.5" fill="none" stroke="#8d8f91" stroke-width="1.8"/></svg>
<div class="t" style="left:41.0px;top:1503.92px;font-size:19px;line-height:19px;color:#bbbbbb;transform:scaleX(1.0322);transform-origin:0 0;">Failed to start monitoring 8DF6R17503000072 (30 minutes ago)</div>
<div class="t" style="left:2234.0px;top:1503.92px;font-size:19px;line-height:19px;color:#bbbbbb;transform:scaleX(0.9465);transform-origin:0 0;">29:1</div>
<div class="t" style="left:2288.5px;top:1503.92px;font-size:19px;line-height:19px;color:#bbbbbb;transform:scaleX(0.8569);transform-origin:0 0;">LF</div>
<div class="t" style="left:2327.5px;top:1503.92px;font-size:19px;line-height:19px;color:#bbbbbb;transform:scaleX(0.9567);transform-origin:0 0;">UTF-8</div>
<div class="t" style="left:2396.5px;top:1503.92px;font-size:19px;line-height:19px;color:#bbbbbb;transform:scaleX(0.9599);transform-origin:0 0;">4 spaces</div>
<svg style="position:absolute;left:2486px;top:1504px;" width="18" height="19" viewBox="0 0 18 19"><path d="M3 8 V5 A4 4 0 0 1 11 5" fill="none" stroke="#afb1b3" stroke-width="2"/><rect x="6" y="10" width="11" height="9" fill="#afb1b3"/></svg>
<svg style="position:absolute;left:2524px;top:1503px;" width="20" height="20" viewBox="0 0 20 20"><path d="M1 1 H19 V14 H8 L4 18 V14 H1 Z" fill="#afb1b3"/><rect x="9" y="3.5" width="2.2" height="6" fill="#3c3f41"/><rect x="9" y="10.5" width="2.2" height="2.2" fill="#3c3f41"/></svg>
<div style="position:absolute;left:2310px;top:1458px;width:250px;height:39px;background:#ffffff;border:1px solid #c9d3e6;border-right:none;"></div>
<div style="position:absolute;left:2530px;top:1460px;width:30px;height:35px;background:radial-gradient(circle at 60% 50%, #f3e6ff 0%, #ffffff 80%);"></div>
<svg style="position:absolute;left:2288px;top:1447px;" width="56" height="54" viewBox="0 0 56 54"><defs><linearGradient id="sg" x1="0" y1="0" x2="1" y2="1"><stop offset="0" stop-color="#f77a3c"/><stop offset="1" stop-color="#ee4f16"/></linearGradient></defs><g transform="rotate(-16 28 27)"><rect x="7" y="6" width="42" height="43" rx="7" fill="url(#sg)"/></g><path d="M40.5 16 Q27 9.5 17.5 15.5 Q9.5 21.5 19.5 25.5 Q33 29 30 36 Q25.5 42 12.5 40.5" fill="none" stroke="#ffffff" stroke-width="6.2" stroke-linecap="round"/></svg>
<div class="t" style="left:2349.0px;top:1468.38px;font-size:22px;line-height:22px;color:#1768e4;font-weight:bold;-webkit-text-stroke:1.3px #1768e4;">英</div>
<svg style="position:absolute;left:2388px;top:1470px;" width="20" height="22" viewBox="0 0 20 22"><circle cx="3.5" cy="4.5" r="2.6" fill="#1768e4"/><circle cx="14" cy="10.5" r="3" fill="#1768e4"/><path d="M16.5 10.5 Q17 16 12 19.5" fill="none" stroke="#1768e4" stroke-width="2.4" stroke-linecap="round"/></svg>
<svg style="position:absolute;left:2422px;top:1465px;" width="20" height="28" viewBox="0 0 20 28"><rect x="6" y="1" width="8" height="15" rx="4" fill="#1768e4"/><path d="M2.5 11 Q2.5 20 10 20 Q17.5 20 17.5 11" fill="none" stroke="#1768e4" stroke-width="2.4"/><rect x="9" y="20" width="2.4" height="6" fill="#1768e4"/><rect x="6" y="25" width="8" height="2.2" fill="#1768e4"/></svg>
<svg style="position:absolute;left:2458px;top:1469px;" width="24" height="19" viewBox="0 0 24 19"><rect x="1" y="1" width="22" height="17" rx="2.5" fill="none" stroke="#1768e4" stroke-width="2.2"/><rect x="4" y="5" width="2.4" height="2.4" fill="#1768e4"/><rect x="4" y="9" width="2.4" height="2.4" fill="#1768e4"/><rect x="8" y="5" width="2.4" height="2.4" fill="#1768e4"/><rect x="8" y="9" width="2.4" height="2.4" fill="#1768e4"/><rect x="12" y="5" width="2.4" height="2.4" fill="#1768e4"/><rect x="12" y="9" width="2.4" height="2.4" fill="#1768e4"/><rect x="16" y="5" width="2.4" height="2.4" fill="#1768e4"/><rect x="16" y="9" width="2.4" height="2.4" fill="#1768e4"/><rect x="20" y="5" width="2.4" height="2.4" fill="#1768e4"/><rect x="20" y="9" width="2.4" height="2.4" fill="#1768e4"/><rect x="6" y="13" width="12" height="2.4" fill="#1768e4"/></svg>
<svg style="position:absolute;left:2493px;top:1467px;" width="23" height="23" viewBox="0 0 23 23"><path d="M7 1 Q11.5 4.5 16 1 L22.5 5 L20 11 L17.5 10 V22 H5.5 V10 L3 11 L0.5 5 Z" fill="#1768e4"/></svg>
<svg style="position:absolute;left:2530px;top:1468px;" width="21" height="21" viewBox="0 0 21 21"><rect x="0.5" y="0.5" width="9" height="9" rx="2" fill="#1768e4"/><rect x="11.5" y="0.5" width="9" height="9" rx="2" fill="#1768e4"/><rect x="14" y="3" width="4" height="4" fill="#fff"/><rect x="0.5" y="11.5" width="9" height="9" rx="2" fill="#1768e4"/><rect x="11.5" y="11.5" width="9" height="9" rx="2" fill="#1768e4"/></svg>
</body></html>
